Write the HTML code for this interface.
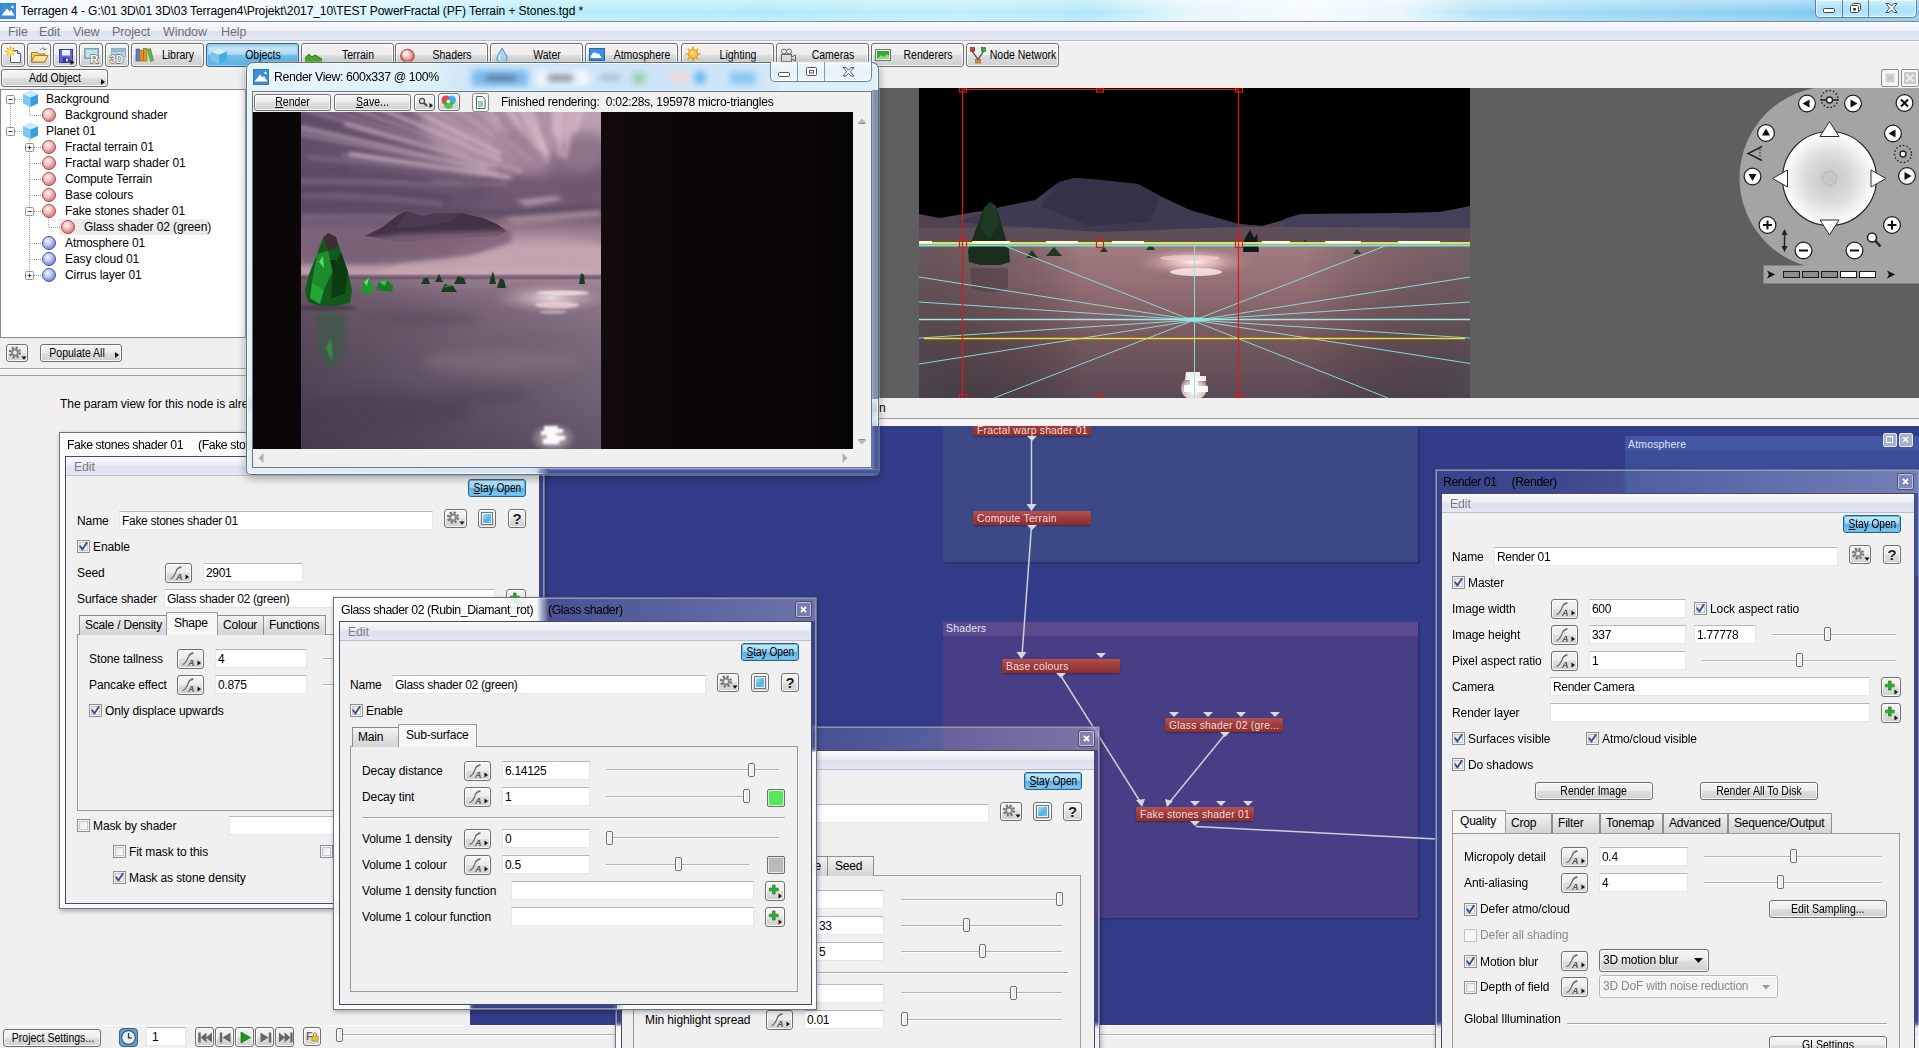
<!DOCTYPE html><html><head><meta charset="utf-8"><title>Terragen 4</title><style>
*{box-sizing:border-box}
html,body{margin:0;padding:0}
body{width:1919px;height:1048px;overflow:hidden;background:#f0f0f0;font-family:"Liberation Sans",sans-serif;font-size:12px;color:#000;position:relative}
div{position:absolute}
.t{white-space:pre;line-height:16px;height:16px;font-size:12px;letter-spacing:-0.1px}
.nar{display:inline-block;transform:scaleX(.84);transform-origin:center;white-space:pre}
.btn{border:1px solid #707070;border-radius:3px;background:linear-gradient(#f4f4f4 0%,#ececec 48%,#dedede 52%,#d0d0d0 100%);box-shadow:inset 0 0 0 1px rgba(255,255,255,.85);text-align:center;white-space:pre;font-size:12px;overflow:hidden}
.btn span{display:inline-block}
.inp{background:#fff;border:1px solid #e3e6ec;border-top-color:#b5b8c0;padding-left:2px;white-space:pre;font-size:12px;letter-spacing:-0.3px;overflow:hidden}
.chk{width:13px;height:13px;border:1px solid #8e8f8f;background:linear-gradient(135deg,#d8dce0 0%,#f6f6f6 60%,#fff 100%);box-shadow:inset 0 0 0 1px #f4f4f4, inset 0 0 0 2px #c5c9cf}
.chk.dis{border-color:#c2c2c2;background:#f6f6f6;box-shadow:none}
.trk{height:2px;border-top:1px solid #b4b4b4;border-bottom:1px solid #fcfcfc}
.thb{width:7px;height:14px;border:1px solid #6e6e6e;border-radius:2px;background:linear-gradient(90deg,#fdfdfd,#dcdcdc);box-shadow:inset 0 0 0 1px #fff}
.stay{border:1px solid #2c628b;border-radius:3px;background:linear-gradient(#cbe8f8 0%,#a3d5f1 46%,#5cace0 52%,#86caef 100%);box-shadow:inset 0 0 0 1px #5bbcf0;text-align:center;font-size:12px;white-space:pre}
.clb{width:15px;height:15px;border:1px solid rgba(255,255,255,.5);border-radius:2px;background:rgba(255,255,255,.08);box-shadow:0 0 0 1px rgba(40,45,90,.55)}
.tab{border:1px solid #8e8e8e;border-bottom:none;background:linear-gradient(#f3f3f3,#e2e2e2 50%,#d4d4d4);font-size:12px;letter-spacing:-0.2px;white-space:pre;text-align:left;padding-left:5px;line-height:19px;height:20px}
.tab.sel{background:#f6f6f6;border-color:#9a9a9a;height:23px;line-height:20px;padding-left:7px}
.pane{border:1px solid #9a9a9a;background:#f0f0f0}
.node{background:linear-gradient(#b45252 0%,#a03c3c 45%,#8c2e2e 100%);color:#f2dcda;font-size:11.5px;line-height:14px;height:14px;white-space:pre;padding-left:4px;box-shadow:0 1px 2px rgba(0,0,0,.35);border-radius:1px;letter-spacing:.25px}
.tri{width:0;height:0;border-left:5px solid transparent;border-right:5px solid transparent;border-top:5px solid #d8d8e4}
</style></head><body>
<div style="left:0px;top:0px;width:1919px;height:21px;background:linear-gradient(90deg,#eef8fd 0%,#f4fbfe 13%,#d2f3fc 20%,#b6ecfb 28%,#b0eafa 40%,#bdeefb 50%,#b0e8fa 57%,#e6f6fc 62%,#f4fbfe 68%,#e9f6fc 73%,#b4e3f8 77%,#9ad8f5 84%,#8fd0f3 90%,#7cc6ef 96%,#86cbf0 100%)"></div>
<div style="left:0px;top:0px;width:1919px;height:21px;background:linear-gradient(rgba(255,255,255,.4) 0%,rgba(255,255,255,.12) 45%,rgba(255,255,255,0) 55%,rgba(255,255,255,.2) 100%)"></div>
<div style="left:0px;top:21px;width:1919px;height:1px;background:#7d8a96"></div>
<svg style="position:absolute;left:0;top:3px" width="16" height="16" viewBox="0 0 16 16"><rect width="16" height="16" fill="#3e8fd6"/><rect x="0" y="0" width="16" height="16" fill="none" stroke="#2f7ac0"/><path d="M1.5 12.5 L7 5.5 L9.5 8.5 L11 7 L14.5 12.5Z" fill="#fff"/><circle cx="12.5" cy="4" r="1.2" fill="#fff"/></svg>
<div class="t" style="left:21px;top:2.5px;letter-spacing:-0.07px;font-size:12px">Terragen 4 - G:\01 3D\01 3D\03 Terragen4\Projekt\2017_10\TEST PowerFractal (PF) Terrain + Stones.tgd *</div>
<div style="left:1815px;top:0px;width:102px;height:18px;border:1px solid #6b8296;border-top:none;border-radius:0 0 5px 5px;background:linear-gradient(rgba(215,248,255,.75),rgba(190,238,253,.6) 50%,rgba(215,246,255,.7));box-shadow:inset 0 0 0 1px rgba(255,255,255,.6)"></div>
<div style="left:1842px;top:0px;width:1px;height:17px;background:#6b8296"></div>
<div style="left:1868px;top:0px;width:1px;height:17px;background:#6b8296"></div>
<svg style="position:absolute;left:1815px;top:0" width="102" height="18" viewBox="0 0 102 18"><rect x="8.5" y="8.5" width="11" height="4" rx="1" fill="#fff" stroke="#444"/><g fill="#fff" stroke="#444"><rect x="37.500" y="3.500" width="8" height="7" rx="1"/><rect x="35.500" y="5.500" width="8" height="7" rx="1"/><rect x="38" y="8" width="3" height="2.5" fill="#444" stroke="none"/></g><path d="M71 3.500 L74 3.500 L76.500 6 L79 3.500 L82 3.500 L78.500 8 L82 12.500 L79 12.500 L76.500 10 L74 12.500 L71 12.500 L74.500 8Z" fill="#fff" stroke="#444"/></svg>
<div style="left:0px;top:22px;width:1919px;height:19px;background:linear-gradient(#fbfbfd 0%,#eef0f8 45%,#dde1ef 50%,#e6e9f4 100%)"></div>
<div style="left:0px;top:40px;width:1919px;height:1px;background:#b9bfd0"></div>
<div style="left:0px;top:41px;width:1919px;height:1px;background:#f8f8fa"></div>
<div class="t" style="left:8px;top:23.5px;color:#707070;letter-spacing:-0.1px;font-size:12.5px">File</div>
<div class="t" style="left:39px;top:23.5px;color:#707070;letter-spacing:-0.1px;font-size:12.5px">Edit</div>
<div class="t" style="left:73px;top:23.5px;color:#707070;letter-spacing:-0.1px;font-size:12.5px">View</div>
<div class="t" style="left:112px;top:23.5px;color:#707070;letter-spacing:-0.1px;font-size:12.5px">Project</div>
<div class="t" style="left:163px;top:23.5px;color:#707070;letter-spacing:-0.1px;font-size:12.5px">Window</div>
<div class="t" style="left:221px;top:23.5px;color:#707070;letter-spacing:-0.1px;font-size:12.5px">Help</div>
<div class="btn" style="left:1px;top:43px;width:24px;height:24px;"><svg width="22" height="22" viewBox="0 0 22 22" style="position:absolute;left:0px;top:0px"><path d="M8.500 6.500h7l3 3v9h-10z" fill="#f4f7fd" stroke="#5a6270"/><path d="M15.500 6.500v3h3" fill="#cfd6e6" stroke="#5a6270"/><g stroke="#f0a000" stroke-width="1.100"><path d="M8.500 2.500v10M3.500 7.500h10M5 4l7 7M12 4l-7 7"/></g><circle cx="8.500" cy="7.500" r="3.200" fill="#ffd23a"/><circle cx="8.500" cy="7.500" r="1.800" fill="#ffec9a"/></svg></div>
<div class="btn" style="left:27px;top:43px;width:24px;height:24px;"><svg width="22" height="22" viewBox="0 0 22 22" style="position:absolute;left:0px;top:0px"><path d="M3.500 8.500h6l1.500 1.500h6v8h-13.500z" fill="#f3cf5e" stroke="#a5802a"/><path d="M3.500 18 L6.500 11.500h13.500l-3.500 6.500z" fill="#fbe394" stroke="#a5802a"/><path d="M12 6c2-3 5-2 5 0l1.500-1.500M17 6l-2-.5" fill="none" stroke="#888"/></svg></div>
<div class="btn" style="left:53px;top:43px;width:24px;height:24px;"><svg width="22" height="22" viewBox="0 0 22 22" style="position:absolute;left:0px;top:0px"><rect x="5.500" y="5.500" width="13" height="13" fill="#6466d8" stroke="#3a3c9c"/><rect x="8" y="6" width="8" height="5.500" fill="#eef0ff"/><rect x="8.500" y="13.500" width="7" height="5" fill="#34369a"/><rect x="12" y="14.500" width="2" height="3" fill="#dde"/><path d="M16.500 16l4 2.500-4 2.500z" fill="#111"/></svg></div>
<div class="btn" style="left:79px;top:43px;width:24px;height:24px;"><svg width="22" height="22" viewBox="0 0 22 22" style="position:absolute;left:0px;top:0px"><rect x="4.500" y="4.500" width="14" height="10" fill="#8fc3e0" stroke="#8c9aa6"/><rect x="6" y="6" width="11" height="7" fill="#c6e2f2"/><text x="10" y="18.500" font-family="Liberation Sans,sans-serif" font-weight="bold" font-size="11.500" fill="#fff" stroke="#6c6c6c" stroke-width="1.300" paint-order="stroke">R</text></svg></div>
<div class="btn" style="left:105px;top:43px;width:24px;height:24px;"><svg width="22" height="22" viewBox="0 0 22 22" style="position:absolute;left:0px;top:0px"><rect x="5.500" y="4.500" width="14" height="8" fill="#b4d6ea" stroke="#a0adb8"/><rect x="6" y="5" width="13" height="3" fill="#8fbcd8"/><text x="4" y="18.500" font-family="Liberation Sans,sans-serif" font-weight="bold" font-size="10.500" fill="#fff" stroke="#6c6c6c" stroke-width="1.300" paint-order="stroke">3D</text></svg></div>
<div class="btn" style="left:131px;top:43px;width:73px;height:24px;"><svg width="22" height="22" viewBox="0 0 22 22" style="position:absolute;left:1px;top:0px"><rect x="3" y="5" width="3.500" height="12" fill="#3d87d8" stroke="#2a5f9c" stroke-width=".6"/><rect x="6.500" y="6" width="4" height="11" fill="#e8862a" stroke="#a85a12" stroke-width=".6"/><rect x="10.500" y="4.500" width="3.500" height="12.500" fill="#c7a02a" stroke="#8a6c12" stroke-width=".6"/><path d="M14.500 5.500l3-1 3 12-3 1z" fill="#5fb648" stroke="#3a7f2a" stroke-width=".6"/></svg><span class="nar" style="position:absolute;left:-54.5px;width:200px;top:3px;line-height:16px;font-size:12.5px;text-align:center">Library</span></div>
<div class="btn" style="left:206px;top:43px;width:93px;height:24px;border-color:#2c628b;background:linear-gradient(#d4ebf8 0%,#b2dcf3 45%,#74bde8 52%,#5fb0e2 100%);box-shadow:inset 0 0 0 1px #8fd4f7,inset 0 2px 3px rgba(0,40,80,.25);"><svg width="22" height="22" viewBox="0 0 22 22" style="position:absolute;left:1px;top:0px"><path d="M3 7.500l8-3.500 8 3.500v9l-8 3.500-8-3.500z" fill="#7cc6ee"/><path d="M3 7.500l8-3.500 8 3.500-8 3.300z" fill="#d4eefb"/><path d="M11 10.800v9.200l8-3.500v-9z" fill="#4aaae2"/></svg><span class="nar" style="position:absolute;left:-44.5px;width:200px;top:3px;line-height:16px;font-size:12.5px;text-align:center">Objects</span></div>
<div class="btn" style="left:301px;top:43px;width:93px;height:24px;"><svg width="22" height="22" viewBox="0 0 22 22" style="position:absolute;left:1px;top:0px"><path d="M2 19 L2 14 L6 10 L9 13 L12 11 L17 14 L19 15 L19 19Z" fill="#4caa28"/><path d="M2 14 L6 10 L9 13 L12 11 L19 15" fill="none" stroke="#2f7a16"/></svg><span class="nar" style="position:absolute;left:-44.5px;width:200px;top:3px;line-height:16px;font-size:12.5px;text-align:center">Terrain</span></div>
<div class="btn" style="left:395px;top:43px;width:93px;height:24px;"><svg width="22" height="22" viewBox="0 0 22 22" style="position:absolute;left:1px;top:0px"><circle cx="10.500" cy="12" r="6.800" fill="#e27474" stroke="#b84a4a"/><circle cx="10" cy="11" r="5" fill="#f3b4b4"/><circle cx="9" cy="10" r="3" fill="#fdeaea"/></svg><span class="nar" style="position:absolute;left:-44.5px;width:200px;top:3px;line-height:16px;font-size:12.5px;text-align:center">Shaders</span></div>
<div class="btn" style="left:490px;top:43px;width:93px;height:24px;"><svg width="22" height="22" viewBox="0 0 22 22" style="position:absolute;left:1px;top:0px"><path d="M10 4 C12 8 15 11 15 14.500 A5 5 0 0 1 5 14.500 C5 11 8 8 10 4Z" fill="#a8d4f6" stroke="#4a8cd0"/><path d="M8 11c-1 2-1 4 .5 5.500" fill="none" stroke="#fff" stroke-width="1.2"/></svg><span class="nar" style="position:absolute;left:-44.5px;width:200px;top:3px;line-height:16px;font-size:12.5px;text-align:center">Water</span></div>
<div class="btn" style="left:585px;top:43px;width:93px;height:24px;"><svg width="22" height="22" viewBox="0 0 22 22" style="position:absolute;left:1px;top:0px"><rect x="2.500" y="4.500" width="15" height="12" fill="#3f8fe0" stroke="#2b68ac"/><path d="M5 14c-2 0-2-3 0-3 0-3 4-3 4.500-1 2-1 4 0 3.500 2 2 0 2 2 0 2z" fill="#fff"/></svg><span class="nar" style="position:absolute;left:-44.5px;width:200px;top:3px;line-height:16px;font-size:12.5px;text-align:center">Atmosphere</span></div>
<div class="btn" style="left:681px;top:43px;width:93px;height:24px;"><svg width="22" height="22" viewBox="0 0 22 22" style="position:absolute;left:1px;top:0px"><g stroke="#f0a020" stroke-width="1.600"><path d="M10 2.500v15M2.500 10h15M4.700 4.700l10.600 10.600M15.300 4.700L4.700 15.300"/></g><circle cx="10" cy="10" r="4.600" fill="#ffc23a" stroke="#e8961a"/><circle cx="9" cy="9" r="2" fill="#ffe28a"/></svg><span class="nar" style="position:absolute;left:-44.5px;width:200px;top:3px;line-height:16px;font-size:12.5px;text-align:center">Lighting</span></div>
<div class="btn" style="left:776px;top:43px;width:93px;height:24px;"><svg width="22" height="22" viewBox="0 0 22 22" style="position:absolute;left:1px;top:0px"><rect x="3.500" y="10.500" width="10" height="7" fill="#ddd" stroke="#666"/><path d="M13.500 13l4-2v6l-4-2" fill="#ddd" stroke="#666"/><circle cx="6" cy="7.500" r="2.500" fill="#eee" stroke="#666"/><circle cx="11" cy="7.500" r="2.500" fill="#eee" stroke="#666"/></svg><span class="nar" style="position:absolute;left:-44.5px;width:200px;top:3px;line-height:16px;font-size:12.5px;text-align:center">Cameras</span></div>
<div class="btn" style="left:871px;top:43px;width:93px;height:24px;"><svg width="22" height="22" viewBox="0 0 22 22" style="position:absolute;left:1px;top:0px"><rect x="2.500" y="5.500" width="15" height="11" fill="#2f9a2f" stroke="#777"/><rect x="3.500" y="6.500" width="13" height="9" fill="#35a83a" stroke="#e8e8e8"/><path d="M4 15l4-4 3 2 3-3 2 2v3z" fill="#8fe06a"/></svg><span class="nar" style="position:absolute;left:-44.5px;width:200px;top:3px;line-height:16px;font-size:12.5px;text-align:center">Renderers</span></div>
<div class="btn" style="left:966px;top:43px;width:93px;height:24px;"><svg width="22" height="22" viewBox="0 0 22 22" style="position:absolute;left:1px;top:0px"><rect x="2.500" y="3.500" width="4" height="4" fill="#e03030" stroke="#901818" stroke-width=".6"/><rect x="13.500" y="3.500" width="4" height="4" fill="#38a838" stroke="#1c6c1c" stroke-width=".6"/><rect x="7.500" y="15.500" width="5" height="3.500" fill="#e08a30" stroke="#90501a" stroke-width=".6"/><path d="M4.500 7.500L10 15.500M15.500 7.500L10 15.500" stroke="#444" stroke-width="1.300" fill="none"/></svg><span class="nar" style="position:absolute;left:-44.5px;width:200px;top:3px;line-height:16px;font-size:12.5px;text-align:center">Node Network</span></div>
<div class="btn" style="left:1px;top:69px;width:107px;height:18px;line-height:16px;"><span style=""><span class="nar" style="font-size:12.5px">Add Object</span></span></div>
<svg style="position:absolute;left:100px;top:78px" width="6" height="8"><path d="M1 1l4 3-4 3z" fill="#111"/></svg>
<div style="left:0px;top:89px;width:246px;height:249px;background:#fff;border:1px solid #828790"></div>
<div style="left:10px;top:104px;width:1px;height:27px;background-image:linear-gradient(#a0a0a0 50%,transparent 50%);background-size:1px 2px"></div>
<div style="left:29px;top:107px;width:1px;height:8px;background-image:linear-gradient(#a0a0a0 50%,transparent 50%);background-size:1px 2px"></div>
<div style="left:29px;top:139px;width:1px;height:137px;background-image:linear-gradient(#a0a0a0 50%,transparent 50%);background-size:1px 2px"></div>
<div style="left:48px;top:216px;width:1px;height:12px;background-image:linear-gradient(#a0a0a0 50%,transparent 50%);background-size:1px 2px"></div>
<div style="left:15px;top:99px;width:7px;height:1px;background-image:linear-gradient(90deg,#a0a0a0 50%,transparent 50%);background-size:2px 1px"></div>
<svg style="position:absolute;left:6px;top:95px" width="9" height="9" viewBox="0 0 9 9"><rect x=".5" y=".5" width="8" height="8" rx="1" fill="#fafafa" stroke="#919191"/><path d="M2.500 4.500h4" stroke="#444"/></svg>
<svg style="position:absolute;left:22px;top:90px" width="17" height="17" viewBox="0 0 17 17"><path d="M1 4.500l7.500-3.500 7.500 3.500v8.500l-7.500 3.500-7.500-3.500z" fill="#56b4ea"/><path d="M1 4.500l7.500-3.500 7.500 3.500-7.500 3.200z" fill="#c8eafb"/><path d="M8.500 7.700v9.300l7.500-3.500V4.500z" fill="#3a9fdc"/><path d="M1 4.500l7.500 3.200v9.300l-7.500-3.500z" fill="#7cc8f0"/></svg>
<div class="t" style="left:46px;top:91px;">Background</div>
<div style="left:30px;top:115px;width:12px;height:1px;background-image:linear-gradient(90deg,#a0a0a0 50%,transparent 50%);background-size:2px 1px"></div>
<div style="left:42px;top:108px;width:14px;height:14px;border-radius:50%;background:radial-gradient(circle at 40% 35%,#fff2f2 0%,#f3c4c4 35%,#df8080 70%,#c05050 100%);border:1px solid #b04848"></div>
<div class="t" style="left:65px;top:107px;">Background shader</div>
<div style="left:15px;top:131px;width:7px;height:1px;background-image:linear-gradient(90deg,#a0a0a0 50%,transparent 50%);background-size:2px 1px"></div>
<svg style="position:absolute;left:6px;top:127px" width="9" height="9" viewBox="0 0 9 9"><rect x=".5" y=".5" width="8" height="8" rx="1" fill="#fafafa" stroke="#919191"/><path d="M2.500 4.500h4" stroke="#444"/></svg>
<svg style="position:absolute;left:22px;top:122px" width="17" height="17" viewBox="0 0 17 17"><path d="M1 4.500l7.500-3.500 7.500 3.500v8.500l-7.500 3.500-7.500-3.500z" fill="#56b4ea"/><path d="M1 4.500l7.500-3.500 7.500 3.500-7.500 3.200z" fill="#c8eafb"/><path d="M8.500 7.700v9.300l7.500-3.500V4.500z" fill="#3a9fdc"/><path d="M1 4.500l7.500 3.200v9.300l-7.500-3.500z" fill="#7cc8f0"/></svg>
<div class="t" style="left:46px;top:123px;">Planet 01</div>
<div style="left:30px;top:147px;width:12px;height:1px;background-image:linear-gradient(90deg,#a0a0a0 50%,transparent 50%);background-size:2px 1px"></div>
<svg style="position:absolute;left:25px;top:143px" width="9" height="9" viewBox="0 0 9 9"><rect x=".5" y=".5" width="8" height="8" rx="1" fill="#fafafa" stroke="#919191"/><path d="M2.500 4.500h4" stroke="#444"/><path d="M4.500 2.500v4" stroke="#444"/></svg>
<div style="left:42px;top:140px;width:14px;height:14px;border-radius:50%;background:radial-gradient(circle at 40% 35%,#fff2f2 0%,#f3c4c4 35%,#df8080 70%,#c05050 100%);border:1px solid #b04848"></div>
<div class="t" style="left:65px;top:139px;">Fractal terrain 01</div>
<div style="left:30px;top:163px;width:12px;height:1px;background-image:linear-gradient(90deg,#a0a0a0 50%,transparent 50%);background-size:2px 1px"></div>
<div style="left:42px;top:156px;width:14px;height:14px;border-radius:50%;background:radial-gradient(circle at 40% 35%,#fff2f2 0%,#f3c4c4 35%,#df8080 70%,#c05050 100%);border:1px solid #b04848"></div>
<div class="t" style="left:65px;top:155px;">Fractal warp shader 01</div>
<div style="left:30px;top:179px;width:12px;height:1px;background-image:linear-gradient(90deg,#a0a0a0 50%,transparent 50%);background-size:2px 1px"></div>
<div style="left:42px;top:172px;width:14px;height:14px;border-radius:50%;background:radial-gradient(circle at 40% 35%,#fff2f2 0%,#f3c4c4 35%,#df8080 70%,#c05050 100%);border:1px solid #b04848"></div>
<div class="t" style="left:65px;top:171px;">Compute Terrain</div>
<div style="left:30px;top:195px;width:12px;height:1px;background-image:linear-gradient(90deg,#a0a0a0 50%,transparent 50%);background-size:2px 1px"></div>
<div style="left:42px;top:188px;width:14px;height:14px;border-radius:50%;background:radial-gradient(circle at 40% 35%,#fff2f2 0%,#f3c4c4 35%,#df8080 70%,#c05050 100%);border:1px solid #b04848"></div>
<div class="t" style="left:65px;top:187px;">Base colours</div>
<div style="left:30px;top:211px;width:12px;height:1px;background-image:linear-gradient(90deg,#a0a0a0 50%,transparent 50%);background-size:2px 1px"></div>
<svg style="position:absolute;left:25px;top:207px" width="9" height="9" viewBox="0 0 9 9"><rect x=".5" y=".5" width="8" height="8" rx="1" fill="#fafafa" stroke="#919191"/><path d="M2.500 4.500h4" stroke="#444"/></svg>
<div style="left:42px;top:204px;width:14px;height:14px;border-radius:50%;background:radial-gradient(circle at 40% 35%,#fff2f2 0%,#f3c4c4 35%,#df8080 70%,#c05050 100%);border:1px solid #b04848"></div>
<div class="t" style="left:65px;top:203px;">Fake stones shader 01</div>
<div style="left:59px;top:219px;width:149px;height:16px;background:#ececec"></div>
<div style="left:49px;top:227px;width:12px;height:1px;background-image:linear-gradient(90deg,#a0a0a0 50%,transparent 50%);background-size:2px 1px"></div>
<div style="left:61px;top:220px;width:14px;height:14px;border-radius:50%;background:radial-gradient(circle at 40% 35%,#fff2f2 0%,#f3c4c4 35%,#df8080 70%,#c05050 100%);border:1px solid #b04848"></div>
<div class="t" style="left:84px;top:219px;">Glass shader 02 (green)</div>
<div style="left:30px;top:243px;width:12px;height:1px;background-image:linear-gradient(90deg,#a0a0a0 50%,transparent 50%);background-size:2px 1px"></div>
<div style="left:42px;top:236px;width:14px;height:14px;border-radius:50%;background:radial-gradient(circle at 40% 35%,#f4f6ff 0%,#c3ccf6 35%,#7f8fe0 70%,#4c5cc0 100%);border:1px solid #3f4fae"></div>
<div class="t" style="left:65px;top:235px;">Atmosphere 01</div>
<div style="left:30px;top:259px;width:12px;height:1px;background-image:linear-gradient(90deg,#a0a0a0 50%,transparent 50%);background-size:2px 1px"></div>
<div style="left:42px;top:252px;width:14px;height:14px;border-radius:50%;background:radial-gradient(circle at 40% 35%,#f4f6ff 0%,#c3ccf6 35%,#7f8fe0 70%,#4c5cc0 100%);border:1px solid #3f4fae"></div>
<div class="t" style="left:65px;top:251px;">Easy cloud 01</div>
<div style="left:30px;top:275px;width:12px;height:1px;background-image:linear-gradient(90deg,#a0a0a0 50%,transparent 50%);background-size:2px 1px"></div>
<svg style="position:absolute;left:25px;top:271px" width="9" height="9" viewBox="0 0 9 9"><rect x=".5" y=".5" width="8" height="8" rx="1" fill="#fafafa" stroke="#919191"/><path d="M2.500 4.500h4" stroke="#444"/><path d="M4.500 2.500v4" stroke="#444"/></svg>
<div style="left:42px;top:268px;width:14px;height:14px;border-radius:50%;background:radial-gradient(circle at 40% 35%,#f4f6ff 0%,#c3ccf6 35%,#7f8fe0 70%,#4c5cc0 100%);border:1px solid #3f4fae"></div>
<div class="t" style="left:65px;top:267px;">Cirrus layer 01</div>
<div class="btn" style="left:6px;top:344px;width:22px;height:18px"><svg width="24" height="20" viewBox="0 0 24 20" style="position:absolute;left:-2px;top:-2px"><g transform="translate(10,9.5)"><circle r="4.9" fill="none" stroke="#707070" stroke-width="2.4" stroke-dasharray="2.1 1.75"/><circle r="3.9" fill="#858585"/><circle r="1.9" fill="#ececec"/></g><path d="M16.5 13.5h5l-2.5 3.2z" fill="#111"/></svg></div>
<div class="btn" style="left:40px;top:344px;width:82px;height:18px;line-height:16px;padding-right:8px"><span style=""><span class="nar" style="font-size:12.5px">Populate All</span></span></div>
<svg style="position:absolute;left:114px;top:351px" width="6" height="8"><path d="M1 1l4 3-4 3z" fill="#111"/></svg>
<div style="left:0px;top:368px;width:1919px;height:1px;background:#a6a6a6"></div>
<div style="left:0px;top:369px;width:1919px;height:6px;background:#f4f4f4"></div>
<div style="left:0px;top:375px;width:1919px;height:1px;background:#a0a0a0"></div>
<div class="t" style="left:60px;top:396px;letter-spacing:-0.05px">The param view for this node is already open in another window.</div>
<div style="left:878px;top:398px;width:1041px;height:21px;background:#efefef"></div>
<div style="left:878px;top:418px;width:1041px;height:1px;background:#9c9c9c"></div>
<div style="left:878px;top:419px;width:1041px;height:7px;background:#f6f6f6"></div>
<div class="t" style="left:400px;width:485.5px;top:400px;text-align:right;letter-spacing:-0.05px">Close the other window or bring it to the front to edit this node again</div>
<div style="left:0px;top:1025px;width:1919px;height:23px;background:#f0f0f0"></div>
<div style="left:0px;top:1025px;width:1919px;height:1px;background:#fafafa"></div>
<div class="btn" style="left:3px;top:1029px;width:98px;height:18px;line-height:16px;"><span style=""><span class="nar" style="font-size:12.5px">Project Settings...</span></span></div>
<svg style="position:absolute;left:119px;top:1028px" width="19" height="19" viewBox="0 0 19 19"><rect x=".5" y=".5" width="18" height="18" rx="3.500" fill="#5f9fd2" stroke="#35658e"/><circle cx="9.500" cy="9.500" r="6.800" fill="#e9f1f7" stroke="#4a5a68" stroke-width="1.200"/><path d="M9.500 5v4.800h3.500" fill="none" stroke="#333" stroke-width="1.300"/></svg>
<div class="inp" style="left:146px;top:1027px;width:40px;height:19px;line-height:18px;padding-left:5px">1</div>
<div class="btn" style="left:195px;top:1027px;width:19px;height:20px"><svg width="20" height="19" viewBox="0 0 20 19" style="position:absolute;left:-1.500px;top:-.5px"><path d="M4.500 4.500v10" stroke="#666" stroke-width="2.400"/><path d="M11.500 4.500v10l-6-5zM17 4.500v10l-6-5z" fill="#666"/></svg></div>
<div class="btn" style="left:215px;top:1027px;width:19px;height:20px"><svg width="20" height="19" viewBox="0 0 20 19" style="position:absolute;left:-1.500px;top:-.5px"><path d="M6 4.500v10" stroke="#666" stroke-width="2.400"/><path d="M15.500 4.500v10l-8-5z" fill="#666"/></svg></div>
<div class="btn" style="left:235px;top:1027px;width:19px;height:20px"><svg width="20" height="19" viewBox="0 0 20 19" style="position:absolute;left:-1.500px;top:-.5px"><path d="M6 4v11l9.500-5.500z" fill="#1a9a1a" stroke="#0d6a0d" stroke-width=".6"/></svg></div>
<div class="btn" style="left:255px;top:1027px;width:19px;height:20px"><svg width="20" height="19" viewBox="0 0 20 19" style="position:absolute;left:-1.500px;top:-.5px"><path d="M15 4.500v10" stroke="#666" stroke-width="2.400"/><path d="M5.500 4.500v10l8-5z" fill="#666"/></svg></div>
<div class="btn" style="left:275px;top:1027px;width:19px;height:20px"><svg width="20" height="19" viewBox="0 0 20 19" style="position:absolute;left:-1.500px;top:-.5px"><path d="M16.500 4.500v10" stroke="#666" stroke-width="2.400"/><path d="M4 4.500v10l6-5zM9.500 4.500v10l6-5z" fill="#666"/></svg></div>
<div class="btn" style="left:303px;top:1027px;width:18px;height:19px"><svg width="18" height="19" viewBox="0 0 18 19" style="position:absolute;left:-1px;top:-1px"><text x="3" y="12.500" font-family="Liberation Sans,sans-serif" font-weight="bold" font-size="11" fill="#6a6a6a">F</text><rect x="9" y="9" width="6" height="5" fill="#f0c020" stroke="#a07a10" stroke-width=".6"/><path d="M10.500 9v-1.500a1.500 1.500 0 0 1 3 0V9" fill="none" stroke="#a07a10"/></svg></div>
<div class="trk" style="left:338px;top:1034px;width:1581px"></div>
<div class="thb" style="left:335.5px;top:1027.5px"></div>
<div style="left:470px;top:426px;width:1449px;height:599px;background:#333c88"></div>
<div style="left:943px;top:426px;width:475px;height:136px;background:#3b4a87;box-shadow:1px 1px 2px rgba(0,0,20,.35)"></div>
<div style="left:943px;top:622px;width:475px;height:296px;background:#483e85;box-shadow:1px 1px 2px rgba(0,0,20,.35)"></div>
<div style="left:943px;top:622px;width:475px;height:14px;background:#5a4a8e"></div>
<div class="t" style="left:946px;top:619.5px;color:#e8e4f4;font-size:11.5px;letter-spacing:.2px;transform:scaleX(.91);transform-origin:left">Shaders</div>
<div style="left:1625px;top:436px;width:294px;height:140px;background:#3c4d9a"></div>
<div style="left:1625px;top:436px;width:294px;height:15px;background:#4356a4"></div>
<div class="t" style="left:1628px;top:435.5px;color:#dfe6fa;font-size:11.5px;letter-spacing:.2px;transform:scaleX(.91);transform-origin:left">Atmosphere</div>
<div style="left:1883px;top:433px;width:14px;height:14px;border:1px solid #e6e8f0;border-radius:2px;background:#aab0c8"><svg width="13" height="13" viewBox="0 0 13 13" style="position:absolute;left:-1px;top:-1px"><rect x="3.500" y="3.500" width="6" height="6" fill="none" stroke="#fff"/></svg></div>
<div style="left:1899px;top:433px;width:14px;height:14px;border:1px solid #e6e8f0;border-radius:2px;background:#aab0c8"><svg width="13" height="13" viewBox="0 0 13 13" style="position:absolute;left:-1px;top:-1px"><path d="M4 4l5 5M9 4l-5 5" stroke="#fff" stroke-width="1.400"/></svg></div>
<svg style="position:absolute;left:470px;top:426px" width="1449" height="599" viewBox="470 426 1449 599"><g stroke="#cfcfd8" stroke-width="1.500" fill="none"><path d="M1031.500 437V508"/><path d="M1031.500 526L1022 656"/><path d="M1061 676L1141 803"/><path d="M1224.500 735L1169 803"/><path d="M1196 826.500L1436 839"/></g><g fill="#d6d6de"><path d="M1026.500 504h10l-5 7z"/><path d="M1016.500 652h10l-5 7z"/><path d="M1136 800l9-1-3 8z"/><path d="M1165 799l8 2-6 6z"/></g></svg>
<div class="node" style="left:973px;top:426px;width:118px;height:10px;line-height:8px;overflow:hidden;background:linear-gradient(#a03c3c,#8c2e2e)"><span style="display:inline-block;transform:scaleX(.9);transform-origin:left">Fractal warp shader 01</span></div>
<div class="tri" style="left:1026.5px;top:436px;width:0px;height:0px;"></div>
<div class="node" style="left:973px;top:511px;width:118px;height:14px;line-height:14px"><span style="display:inline-block;transform:scaleX(.9);transform-origin:left">Compute Terrain</span></div>
<div class="tri" style="left:1026.5px;top:525px;width:0px;height:0px;"></div>
<div class="node" style="left:1002px;top:659px;width:118px;height:14px;line-height:14px"><span style="display:inline-block;transform:scaleX(.9);transform-origin:left">Base colours</span></div>
<div class="tri" style="left:1095.5px;top:653px;width:0px;height:0px;"></div>
<div class="tri" style="left:1056px;top:673px;width:0px;height:0px;"></div>
<div class="node" style="left:1165px;top:718px;width:118px;height:14px;line-height:14px"><span style="display:inline-block;transform:scaleX(.9);transform-origin:left">Glass shader 02 (gre...</span></div>
<div class="tri" style="left:1169px;top:712px;width:0px;height:0px;"></div>
<div class="tri" style="left:1202.5px;top:712px;width:0px;height:0px;"></div>
<div class="tri" style="left:1236px;top:712px;width:0px;height:0px;"></div>
<div class="tri" style="left:1270px;top:712px;width:0px;height:0px;"></div>
<div class="tri" style="left:1219.5px;top:732px;width:0px;height:0px;"></div>
<div class="node" style="left:1136px;top:807px;width:118px;height:14px;line-height:14px"><span style="display:inline-block;transform:scaleX(.9);transform-origin:left">Fake stones shader 01</span></div>
<div class="tri" style="left:1189.5px;top:801px;width:0px;height:0px;"></div>
<div class="tri" style="left:1216px;top:801px;width:0px;height:0px;"></div>
<div class="tri" style="left:1242.5px;top:801px;width:0px;height:0px;"></div>
<div class="tri" style="left:1189.5px;top:821px;width:0px;height:0px;"></div>
<div style="left:878px;top:88px;width:1041px;height:310px;background:#5f5f5f"></div>
<svg style="position:absolute;left:919px;top:88px" width="551" height="310" viewBox="919 88 551 310"><defs><linearGradient id="pw" x1="0" y1="0" x2="0" y2="1"><stop offset="0" stop-color="#a07c80"/><stop offset=".25" stop-color="#946f74"/><stop offset=".6" stop-color="#76595f"/><stop offset="1" stop-color="#5a4a55"/></linearGradient><radialGradient id="pg" cx="1194" cy="262" r="60" gradientUnits="userSpaceOnUse" gradientTransform="translate(0 196.500) scale(1 .25)"><stop offset="0" stop-color="#fff0ee"/><stop offset=".35" stop-color="#e8bfc0" stop-opacity=".9"/><stop offset="1" stop-color="#b08888" stop-opacity="0"/></radialGradient><radialGradient id="pg2" cx="1194" cy="392" r="22" gradientUnits="userSpaceOnUse"><stop offset="0" stop-color="#fff"/><stop offset=".5" stop-color="#f6dcdc" stop-opacity=".8"/><stop offset="1" stop-color="#a08080" stop-opacity="0"/></radialGradient><linearGradient id="pl" x1="0" y1="0" x2="1" y2="0"><stop offset="0" stop-color="#3a3a40" stop-opacity=".55"/><stop offset=".3" stop-color="#000" stop-opacity="0"/><stop offset=".7" stop-color="#000" stop-opacity="0"/><stop offset="1" stop-color="#3a4048" stop-opacity=".45"/></linearGradient></defs><rect x="919" y="88" width="551" height="310" fill="#000"/><path d="M919 214 L940 218 L975 212 L1010 208 L1040 204 L1060 208 L1239 224 L1262 226 L1290 218 L1320 214 L1400 214 L1440 212 L1470 207 L1470 246 L919 246Z" fill="#4f4350"/><path d="M919 228 L1470 226 L1470 246 L919 246Z" fill="#5e4e58"/><path d="M955 222 L1000 207 L1035 200 L1059 182 L1075 178 L1100 180 L1138 184 L1160 196 L1190 210 L1239 224 L1262 226 L1100 232 Z" fill="#3f3a52"/><path d="M1059 182 L1075 178 L1100 180 L1138 184 L1160 196 L1150 222 L1090 226 L1040 206Z" fill="#36324a"/><path d="M1284 219 L1300 214 L1400 213 L1440 212 L1470 206 L1470 228 L1284 227Z" fill="#45405a"/><rect x="919" y="245" width="551" height="153" fill="url(#pw)"/><rect x="919" y="245" width="551" height="153" fill="url(#pl)"/><ellipse cx="1194" cy="262" rx="62" ry="16" fill="url(#pg)"/><ellipse cx="1196" cy="272" rx="26" ry="4" fill="#fbe9e6" opacity=".85"/><ellipse cx="1190" cy="258" rx="30" ry="3" fill="#f0d0d0" opacity=".7"/><ellipse cx="1194" cy="388" rx="13" ry="12" fill="url(#pg2)"/><path d="M1186 372h14v4h6v5h-8v5h10v6h-24v-7h6v-5h-5z" fill="#fff" opacity=".9"/><path d="M969 262 L968 250 L975 232 L984 208 L990 202 L996 206 L1002 226 L1009 250 L1010 262 L1000 265 L980 265Z" fill="#182f20"/><path d="M984 208 L990 202 L996 206 L999 222 L990 240 L981 230Z" fill="#1c3a24"/><path d="M970 268h38v20q-18 8-36 0z" fill="#4a3d44" opacity=".55"/><path d="M1243 252 L1244 240 L1250 230 L1254 238 L1257 234 L1259 252Z" fill="#14181c"/><path d="M1026 258l6-8 6 8zM1046 256l8-9 8 9zM1146 250l5-7 4 7zM1100 252l4-5 4 5zM1302 244l3-5 3 5zM1353 254l4-5 4 5z" fill="#1e3a22"/><rect x="919" y="242" width="551" height="2.500" fill="#e8e060"/><rect x="919" y="244.500" width="551" height="2" fill="#7fe0d8"/><g fill="#fffbe0"><rect x="919" y="241" width="13" height="2.500"/><rect x="972" y="241" width="38" height="2.500"/><rect x="1046" y="241" width="32" height="2.500"/><rect x="1112" y="241" width="32" height="2.500"/><rect x="1262" y="241" width="28" height="2.500"/><rect x="1325" y="241" width="36" height="2.500"/><rect x="1398" y="241" width="42" height="2.500"/></g><g stroke="#8fe4e4" stroke-width="1" fill="none" opacity=".9"><path d="M1194.500 246V398"/><path d="M919 277L1470 363.500M919 302L1470 338M919 338L1470 302M919 364L1470 277M994 398L1385 246M1005 246L1388 398"/></g><path d="M919 319.500H1470" stroke="#9aeaea" stroke-width="1.600"/><ellipse cx="1194.500" cy="319.500" rx="16" ry="2.200" fill="#8fe4e4"/><path d="M924 338.500H1465" stroke="#f0e020" stroke-width="1.300"/><g stroke="#e01818" stroke-width="1.200" fill="none"><path d="M962.500 89.500H1238.500M962.500 89.500V398M1238.500 89.500V398"/><rect x="959.500" y="88" width="7" height="4"/><rect x="1096.500" y="88" width="7" height="4"/><rect x="1235.500" y="88" width="7" height="4"/><rect x="959.500" y="239.500" width="7" height="8"/><rect x="1096.500" y="239.500" width="7" height="8"/><rect x="1235.500" y="239.500" width="7" height="8"/><rect x="959.500" y="394.500" width="7" height="6"/><rect x="1096.500" y="394.500" width="7" height="6"/><rect x="1235.500" y="394.500" width="7" height="6"/></g></svg>
<div style="left:1881px;top:69px;width:18px;height:18px;border:1px solid #8e8e8e;border-radius:2px;background:#f6f6f6"><svg width="18" height="18" viewBox="0 0 18 18" style="position:absolute;left:-1px;top:-1px"><rect x="5.500" y="5.500" width="7" height="7" fill="#c4c4c4" stroke="#d2d2d2" stroke-width="2"/></svg></div>
<div style="left:1901px;top:69px;width:18px;height:18px;border:1px solid #8e8e8e;border-radius:2px;background:#f6f6f6"><svg width="18" height="18" viewBox="0 0 18 18" style="position:absolute;left:-1px;top:-1px"><rect x="3" y="3" width="12" height="12" fill="#c9c9c9"/><path d="M5.500 5.500l7 7M12.500 5.500l-7 7" stroke="#ececec" stroke-width="2.200"/></svg></div>
<svg style="position:absolute;left:1730px;top:88px" width="189" height="200" viewBox="1730 88 189 200"><defs><radialGradient id="ng" cx=".5" cy=".5" r=".5"><stop offset="0" stop-color="#c4c4c4"/><stop offset=".55" stop-color="#dedede"/><stop offset="1" stop-color="#fff"/></radialGradient></defs><circle cx="1831" cy="178" r="91.500" fill="#a4a4a4"/><rect x="1831" y="88" width="88" height="190" fill="#a4a4a4"/><rect x="1763.500" y="265.500" width="156" height="18" fill="#a4a4a4"/><circle cx="1829.500" cy="178.500" r="47" fill="url(#ng)" stroke="#2a2a2a" stroke-width="1.200"/><circle cx="1829.500" cy="178.500" r="7" fill="none" stroke="#b4b4b4"/><g fill="#fff" stroke="#2a2a2a" stroke-width="1"><path d="M1829.500 121.500l9.500 15h-19z"/><path d="M1829.500 235l9.500-15h-19z"/><path d="M1772.500 178.500l15-8.500v17z"/><path d="M1886 178.500l-15-8.500v17z"/></g><circle cx="1807" cy="103.5" r="8.400" fill="#fff" stroke="#1a1a1a" stroke-width="1.200"/><path d="M1802.5 103.5l7-4v8z" fill="#111"/><circle cx="1853" cy="103.5" r="8.400" fill="#fff" stroke="#1a1a1a" stroke-width="1.200"/><path d="M1857.5 103.5l-7-4v8z" fill="#111"/><circle cx="1904.5" cy="103" r="8.400" fill="#fff" stroke="#1a1a1a" stroke-width="1.200"/><path d="M1901.0 99.5l7 7M1908.0 99.5l-7 7" stroke="#111" stroke-width="2"/><circle cx="1766" cy="133" r="8.400" fill="#fff" stroke="#1a1a1a" stroke-width="1.200"/><path d="M1766 128.5l4 7h-8z" fill="#111"/><circle cx="1893" cy="133.5" r="8.400" fill="#fff" stroke="#1a1a1a" stroke-width="1.200"/><path d="M1888.5 133.5l7-4v8z" fill="#111"/><circle cx="1752.5" cy="176.5" r="8.400" fill="#fff" stroke="#1a1a1a" stroke-width="1.200"/><path d="M1752.5 181.0l4-7h-8z" fill="#111"/><circle cx="1907" cy="176" r="8.400" fill="#fff" stroke="#1a1a1a" stroke-width="1.200"/><path d="M1911.5 176l-7-4v8z" fill="#111"/><circle cx="1767.5" cy="225" r="8.400" fill="#fff" stroke="#1a1a1a" stroke-width="1.200"/><path d="M1763.0 225h9M1767.5 220.5v9" stroke="#111" stroke-width="2"/><circle cx="1892" cy="225" r="8.400" fill="#fff" stroke="#1a1a1a" stroke-width="1.200"/><path d="M1887.5 225h9M1892 220.5v9" stroke="#111" stroke-width="2"/><circle cx="1803.5" cy="250.5" r="8.400" fill="#fff" stroke="#1a1a1a" stroke-width="1.200"/><path d="M1799.0 250.5h9" stroke="#111" stroke-width="2"/><circle cx="1854.5" cy="250.5" r="8.400" fill="#fff" stroke="#1a1a1a" stroke-width="1.200"/><path d="M1850.0 250.5h9" stroke="#111" stroke-width="2"/><circle cx="1829.500" cy="99" r="8.500" fill="none" stroke="#222" stroke-width="1.400" stroke-dasharray="1.600 2"/><circle cx="1829.500" cy="100" r="3" fill="#fff" stroke="#222" stroke-width="1.400"/><path d="M1821 100h5M1833 100h5" stroke="#222" stroke-width="1.400"/><circle cx="1903" cy="154" r="8.500" fill="none" stroke="#222" stroke-width="1.400" stroke-dasharray="1.600 2"/><circle cx="1903" cy="154" r="3" fill="#fff" stroke="#222" stroke-width="1.400"/><path d="M1762 146.500L1748 153.500L1762 160.500" fill="none" stroke="#222" stroke-width="1.400"/><path d="M1760 149v9" stroke="#222" stroke-dasharray="1.500 1.500"/><path d="M1784.500 231v19" stroke="#222" stroke-width="1.500"/><path d="M1784.500 229l3 6h-6zM1784.500 252l3-6h-6z" fill="#222"/><circle cx="1872" cy="237.500" r="4.500" fill="#fff" stroke="#222" stroke-width="1.600"/><path d="M1875.500 241l5 5.500" stroke="#222" stroke-width="2.400"/><path d="M1767 270.500l8 4-8 4 2-4z" fill="#111"/><path d="M1887 270.500l8 4-8 4 2-4z" fill="#111"/><rect x="1783.5" y="271.500" width="16" height="6" fill="#8c8c8c" stroke="#1a1a1a"/><rect x="1802.5" y="271.500" width="16" height="6" fill="#8c8c8c" stroke="#1a1a1a"/><rect x="1821.5" y="271.500" width="16" height="6" fill="#8c8c8c" stroke="#1a1a1a"/><rect x="1840.5" y="271.500" width="16" height="6" fill="#fff" stroke="#1a1a1a"/><rect x="1859.5" y="271.500" width="16" height="6" fill="#fff" stroke="#1a1a1a"/></svg>
<div style="left:59px;top:432px;width:486px;height:477px;background:rgba(255,255,255,.04);border:1px solid #6c718c;box-shadow:inset 0 0 0 1px rgba(255,255,255,.42),1px 2px 5px rgba(0,0,0,.3);backdrop-filter:blur(2px)"></div>
<div style="left:61px;top:434px;width:482px;height:22px;background:linear-gradient(90deg,rgba(255,255,255,.0) 0%,rgba(255,255,255,.02) 25%,rgba(255,255,255,.26) 100%)"></div>
<div style="left:60px;top:433px;width:410px;height:23px;background:rgba(255,255,255,.72)"></div>
<div style="left:60px;top:456px;width:5px;height:452px;background:rgba(255,255,255,.72)"></div>
<div style="left:65px;top:904px;width:475px;height:4px;background:rgba(255,255,255,.72)"></div>
<div class="t" style="left:67px;top:436.5px;letter-spacing:-0.43px;font-size:12.3px">Fake stones shader 01     (Fake stones shader)</div>
<div style="left:65px;top:456px;width:475px;height:448px;background:#f0f0f0;border:1px solid #454a5e"></div>
<div style="left:66px;top:457px;width:473px;height:19px;background:linear-gradient(#fafafd 0%,#eceff7 40%,#dde2f0 55%,#e3e7f3 100%);border-bottom:1px solid #b8bfd2"></div>
<div class="t" style="left:74px;top:459px;color:#7c7c7c;font-size:12.3px;letter-spacing:-0.1px">Edit</div>
<div class="stay" style="left:468px;top:479px;width:58px;height:18px;line-height:16px"><span class="nar"><u>S</u>tay Open</span></div>
<div class="t" style="left:77px;top:513px;">Name</div>
<div class="inp" style="left:119px;top:511px;width:314px;height:19px;line-height:18px;">Fake stones shader 01</div>
<div class="btn" style="left:444px;top:509px;width:23px;height:19px"><svg width="24" height="20" viewBox="0 0 24 20" style="position:absolute;left:-2px;top:-2px"><g transform="translate(10,9.5)"><circle r="4.9" fill="none" stroke="#707070" stroke-width="2.4" stroke-dasharray="2.1 1.75"/><circle r="3.9" fill="#858585"/><circle r="1.9" fill="#ececec"/></g><path d="M16.5 13.5h5l-2.5 3.2z" fill="#111"/></svg></div>
<div class="btn" style="left:478px;top:509px;width:18px;height:19px"><div style="position:absolute;left:2px;top:2px;width:12px;height:13px;box-shadow:inset 0 0 0 1px #e8f4fb;border:1px solid #777;background:linear-gradient(135deg,#bfe6fb,#4fb2ea 60%,#7fd0f5)"></div></div>
<div class="btn" style="left:508px;top:509px;width:18px;height:19px;line-height:17px;font-weight:bold;font-size:15px;color:#222"><span>?</span></div>
<div class="chk" style="left:77px;top:540px"><svg width="13" height="13" viewBox="0 0 13 13" style="position:absolute;left:-1px;top:-1px"><path d="M3.2 6.2 L5.4 9.6 L9.8 2.8" fill="none" stroke="#3a4f8c" stroke-width="1.9" stroke-linecap="round" stroke-linejoin="round"/></svg></div>
<div class="t" style="left:93px;top:538.5px;">Enable</div>
<div class="t" style="left:77px;top:564.5px;">Seed</div>
<div class="btn fx" style="left:165px;top:563px;width:27px;height:20px;"><svg width="27" height="20" viewBox="0 0 27 20" style="position:absolute;left:-1px;top:-1px"><path d="M5.5 15.5 C9 15 10 11 11.5 7.5 C12.5 5 14 4.2 16.5 4" fill="none" stroke="#6a6a6a" stroke-width="1.3"/><text x="11" y="16.5" font-family="Liberation Sans,sans-serif" font-size="9" font-style="italic" font-weight="bold" fill="#555">A</text><path d="M20.5 11.5 L24 14 L20.5 16.5Z" fill="#111"/></svg></div>
<div class="inp" style="left:203px;top:563px;width:100px;height:19px;line-height:18px;">2901</div>
<div class="t" style="left:77px;top:590.5px;">Surface shader</div>
<div class="inp" style="left:164px;top:589px;width:331px;height:19px;line-height:18px;">Glass shader 02 (green)</div>
<div class="btn" style="left:506px;top:589px;width:20px;height:20px"><svg width="20" height="20" viewBox="0 0 20 20" style="position:absolute;left:-1px;top:-1px"><path d="M7.5 4h2.600v3.200h3.200v2.600h-3.200v3.200h-2.600v-3.200h-3.200v-2.600h3.200z" fill="#2fae2f" stroke="#1b7a1b" stroke-width=".7"/><path d="M13.5 12.500 L17 15 L13.500 17.500Z" fill="#111"/></svg></div>
<div class="pane" style="left:77px;top:634px;width:458px;height:177px;"></div>
<div class="tab" style="left:79px;top:615px;width:88px">Scale / Density</div>
<div class="tab" style="left:217px;top:615px;width:47px">Colour</div>
<div class="tab" style="left:263px;top:615px;width:63px">Functions</div>
<div class="tab sel" style="left:166px;top:612px;width:52px">Shape</div>
<div class="t" style="left:89px;top:651px;">Stone tallness</div>
<div class="btn fx" style="left:177px;top:649px;width:27px;height:20px;"><svg width="27" height="20" viewBox="0 0 27 20" style="position:absolute;left:-1px;top:-1px"><path d="M5.5 15.5 C9 15 10 11 11.5 7.5 C12.5 5 14 4.2 16.5 4" fill="none" stroke="#6a6a6a" stroke-width="1.3"/><text x="11" y="16.5" font-family="Liberation Sans,sans-serif" font-size="9" font-style="italic" font-weight="bold" fill="#555">A</text><path d="M20.5 11.5 L24 14 L20.5 16.5Z" fill="#111"/></svg></div>
<div class="inp" style="left:215px;top:649px;width:92px;height:19px;line-height:18px;">4</div>
<div class="trk" style="left:323px;top:658px;width:200px"></div>
<div class="t" style="left:89px;top:676.5px;">Pancake effect</div>
<div class="btn fx" style="left:177px;top:675px;width:27px;height:20px;"><svg width="27" height="20" viewBox="0 0 27 20" style="position:absolute;left:-1px;top:-1px"><path d="M5.5 15.5 C9 15 10 11 11.5 7.5 C12.5 5 14 4.2 16.5 4" fill="none" stroke="#6a6a6a" stroke-width="1.3"/><text x="11" y="16.5" font-family="Liberation Sans,sans-serif" font-size="9" font-style="italic" font-weight="bold" fill="#555">A</text><path d="M20.5 11.5 L24 14 L20.5 16.5Z" fill="#111"/></svg></div>
<div class="inp" style="left:215px;top:675px;width:92px;height:19px;line-height:18px;">0.875</div>
<div class="trk" style="left:323px;top:683.5px;width:200px"></div>
<div class="chk" style="left:89px;top:704px"><svg width="13" height="13" viewBox="0 0 13 13" style="position:absolute;left:-1px;top:-1px"><path d="M3.2 6.2 L5.4 9.6 L9.8 2.8" fill="none" stroke="#3a4f8c" stroke-width="1.9" stroke-linecap="round" stroke-linejoin="round"/></svg></div>
<div class="t" style="left:105px;top:703px;">Only displace upwards</div>
<div class="chk" style="left:77px;top:819px"></div>
<div class="t" style="left:93px;top:818px;">Mask by shader</div>
<div class="inp" style="left:229px;top:816px;width:266px;height:19px;line-height:18px;"></div>
<div class="chk" style="left:113px;top:845px"></div>
<div class="t" style="left:129px;top:843.5px;">Fit mask to this</div>
<div class="chk" style="left:320px;top:845px"></div>
<div class="chk" style="left:113px;top:871px"><svg width="13" height="13" viewBox="0 0 13 13" style="position:absolute;left:-1px;top:-1px"><path d="M3.2 6.2 L5.4 9.6 L9.8 2.8" fill="none" stroke="#3a4f8c" stroke-width="1.9" stroke-linecap="round" stroke-linejoin="round"/></svg></div>
<div class="t" style="left:129px;top:870px;">Mask as stone density</div>
<div style="left:615px;top:726px;width:485px;height:334px;background:rgba(255,255,255,.04);border:1px solid #6c718c;box-shadow:inset 0 0 0 1px rgba(255,255,255,.42),1px 2px 5px rgba(0,0,0,.3);backdrop-filter:blur(2px)"></div>
<div style="left:617px;top:728px;width:481px;height:22px;background:linear-gradient(90deg,rgba(255,255,255,.0) 0%,rgba(255,255,255,.02) 25%,rgba(255,255,255,.26) 100%)"></div>
<div style="left:616px;top:1026px;width:5px;height:22px;background:rgba(255,255,255,.72)"></div>
<div class="t" style="left:623px;top:730.5px;letter-spacing:-0.43px;font-size:12.3px"></div>
<div style="left:621px;top:750px;width:474px;height:305px;background:#f0f0f0;border:1px solid #454a5e"></div>
<div style="left:622px;top:751px;width:472px;height:19px;background:linear-gradient(#fafafd 0%,#eceff7 40%,#dde2f0 55%,#e3e7f3 100%);border-bottom:1px solid #b8bfd2"></div>
<div class="t" style="left:630px;top:753px;color:#7c7c7c;font-size:12.3px;letter-spacing:-0.1px">Edit</div>
<div class="clb" style="left:1079px;top:731px"><svg width="15" height="15" viewBox="0 0 15 15" style="position:absolute;left:-1px;top:-1px"><path d="M5 5 L10 10 M10 5 L5 10" stroke="#fff" stroke-width="1.8"/></svg></div>
<div class="stay" style="left:1024px;top:772px;width:58px;height:18px;line-height:16px"><span class="nar"><u>S</u>tay Open</span></div>
<div class="inp" style="left:700px;top:804px;width:289px;height:19px;line-height:18px;"></div>
<div class="btn" style="left:1000px;top:802px;width:22px;height:19px"><svg width="24" height="20" viewBox="0 0 24 20" style="position:absolute;left:-2px;top:-2px"><g transform="translate(10,9.5)"><circle r="4.9" fill="none" stroke="#707070" stroke-width="2.4" stroke-dasharray="2.1 1.75"/><circle r="3.9" fill="#858585"/><circle r="1.9" fill="#ececec"/></g><path d="M16.5 13.5h5l-2.5 3.2z" fill="#111"/></svg></div>
<div class="btn" style="left:1033px;top:802px;width:19px;height:19px"><div style="position:absolute;left:2px;top:2px;width:13px;height:13px;box-shadow:inset 0 0 0 1px #e8f4fb;border:1px solid #777;background:linear-gradient(135deg,#bfe6fb,#4fb2ea 60%,#7fd0f5)"></div></div>
<div class="btn" style="left:1063px;top:802px;width:19px;height:19px;line-height:17px;font-weight:bold;font-size:15px;color:#222"><span>?</span></div>
<div class="pane" style="left:633px;top:875px;width:448px;height:190px;"></div>
<div class="tab" style="left:780px;top:856px;width:48px;text-align:right;padding-right:6px">e</div>
<div class="tab" style="left:827px;top:856px;width:47px;text-align:left;padding-left:7px">Seed</div>
<div class="inp" style="left:790px;top:890.0px;width:94px;height:19px;line-height:18px;text-align:left;padding-left:28px"></div>
<div class="trk" style="left:901px;top:898.5px;width:161px"></div>
<div class="thb" style="left:1055.5px;top:892.0px"></div>
<div class="inp" style="left:790px;top:916.0px;width:94px;height:19px;line-height:18px;text-align:left;padding-left:28px">33</div>
<div class="trk" style="left:901px;top:924.5px;width:161px"></div>
<div class="thb" style="left:962.5px;top:918.0px"></div>
<div class="inp" style="left:790px;top:942.0px;width:94px;height:19px;line-height:18px;text-align:left;padding-left:28px">5</div>
<div class="trk" style="left:901px;top:950.5px;width:161px"></div>
<div class="thb" style="left:978.5px;top:944.0px"></div>
<div style="left:640px;top:972px;width:428px;height:1px;background:#a8a8a8"></div>
<div style="left:640px;top:973px;width:428px;height:1px;background:#fdfdfd"></div>
<div class="inp" style="left:790px;top:984px;width:94px;height:19px;line-height:18px;"></div>
<div class="trk" style="left:901px;top:992px;width:161px"></div>
<div class="thb" style="left:1009.5px;top:985.5px"></div>
<div class="t" style="left:645px;top:1012px;">Min highlight spread</div>
<div class="btn fx" style="left:766px;top:1010px;width:27px;height:20px;"><svg width="27" height="20" viewBox="0 0 27 20" style="position:absolute;left:-1px;top:-1px"><path d="M5.5 15.5 C9 15 10 11 11.5 7.5 C12.5 5 14 4.2 16.5 4" fill="none" stroke="#6a6a6a" stroke-width="1.3"/><text x="11" y="16.5" font-family="Liberation Sans,sans-serif" font-size="9" font-style="italic" font-weight="bold" fill="#555">A</text><path d="M20.5 11.5 L24 14 L20.5 16.5Z" fill="#111"/></svg></div>
<div class="inp" style="left:804px;top:1010px;width:80px;height:19px;line-height:18px;">0.01</div>
<div class="trk" style="left:901px;top:1018.5px;width:161px"></div>
<div class="thb" style="left:900.5px;top:1012.0px"></div>
<div style="left:333px;top:597px;width:484px;height:413px;background:rgba(255,255,255,.04);border:1px solid #6c718c;box-shadow:inset 0 0 0 1px rgba(255,255,255,.42),1px 2px 5px rgba(0,0,0,.3);backdrop-filter:blur(2px)"></div>
<div style="left:335px;top:599px;width:480px;height:22px;background:linear-gradient(90deg,rgba(255,255,255,.0) 0%,rgba(255,255,255,.02) 25%,rgba(255,255,255,.26) 100%)"></div>
<div style="left:334px;top:598px;width:202px;height:23px;background:rgba(255,255,255,.72)"></div>
<div style="left:334px;top:621px;width:5px;height:388px;background:rgba(255,255,255,.72)"></div>
<div style="left:339px;top:1005px;width:131px;height:4px;background:rgba(255,255,255,.72)"></div>
<div style="left:617px;top:1005px;width:199px;height:4px;background:rgba(255,255,255,.72)"></div>
<div style="left:812px;top:752px;width:4px;height:253px;background:rgba(255,255,255,.72)"></div>
<div class="t" style="left:341px;top:601.5px;letter-spacing:-0.43px;font-size:12.3px">Glass shader 02 (Rubin_Diamant_rot)     (Glass shader)</div>
<div style="left:339px;top:621px;width:473px;height:384px;background:#f0f0f0;border:1px solid #454a5e"></div>
<div style="left:340px;top:622px;width:471px;height:19px;background:linear-gradient(#fafafd 0%,#eceff7 40%,#dde2f0 55%,#e3e7f3 100%);border-bottom:1px solid #b8bfd2"></div>
<div class="t" style="left:348px;top:624px;color:#7c7c7c;font-size:12.3px;letter-spacing:-0.1px">Edit</div>
<div class="clb" style="left:796px;top:602px"><svg width="15" height="15" viewBox="0 0 15 15" style="position:absolute;left:-1px;top:-1px"><path d="M5 5 L10 10 M10 5 L5 10" stroke="#fff" stroke-width="1.8"/></svg></div>
<div style="left:536px;top:598px;width:13px;height:23px;background:linear-gradient(90deg,rgba(255,255,255,.72),rgba(255,255,255,0))"></div>
<div class="stay" style="left:741px;top:643px;width:58px;height:18px;line-height:16px"><span class="nar"><u>S</u>tay Open</span></div>
<div class="t" style="left:350px;top:677px;">Name</div>
<div class="inp" style="left:392px;top:675px;width:314px;height:19px;line-height:18px;">Glass shader 02 (green)</div>
<div class="btn" style="left:717px;top:673px;width:22px;height:19px"><svg width="24" height="20" viewBox="0 0 24 20" style="position:absolute;left:-2px;top:-2px"><g transform="translate(10,9.5)"><circle r="4.9" fill="none" stroke="#707070" stroke-width="2.4" stroke-dasharray="2.1 1.75"/><circle r="3.9" fill="#858585"/><circle r="1.9" fill="#ececec"/></g><path d="M16.5 13.5h5l-2.5 3.2z" fill="#111"/></svg></div>
<div class="btn" style="left:751px;top:673px;width:18px;height:19px"><div style="position:absolute;left:2px;top:2px;width:12px;height:13px;box-shadow:inset 0 0 0 1px #e8f4fb;border:1px solid #777;background:linear-gradient(135deg,#bfe6fb,#4fb2ea 60%,#7fd0f5)"></div></div>
<div class="btn" style="left:781px;top:673px;width:18px;height:19px;line-height:17px;font-weight:bold;font-size:15px;color:#222"><span>?</span></div>
<div class="chk" style="left:350px;top:704px"><svg width="13" height="13" viewBox="0 0 13 13" style="position:absolute;left:-1px;top:-1px"><path d="M3.2 6.2 L5.4 9.6 L9.8 2.8" fill="none" stroke="#3a4f8c" stroke-width="1.9" stroke-linecap="round" stroke-linejoin="round"/></svg></div>
<div class="t" style="left:366px;top:703px;">Enable</div>
<div class="pane" style="left:350px;top:746px;width:448px;height:246px;"></div>
<div class="tab" style="left:352px;top:727px;width:47px">Main</div>
<div class="tab sel" style="left:398px;top:724px;width:79px">Sub-surface</div>
<div class="t" style="left:362px;top:763px;">Decay distance</div>
<div class="btn fx" style="left:464px;top:761px;width:27px;height:20px;"><svg width="27" height="20" viewBox="0 0 27 20" style="position:absolute;left:-1px;top:-1px"><path d="M5.5 15.5 C9 15 10 11 11.5 7.5 C12.5 5 14 4.2 16.5 4" fill="none" stroke="#6a6a6a" stroke-width="1.3"/><text x="11" y="16.5" font-family="Liberation Sans,sans-serif" font-size="9" font-style="italic" font-weight="bold" fill="#555">A</text><path d="M20.5 11.5 L24 14 L20.5 16.5Z" fill="#111"/></svg></div>
<div class="inp" style="left:502px;top:761px;width:88px;height:19px;line-height:18px;">6.14125</div>
<div class="trk" style="left:606px;top:769px;width:173px"></div>
<div class="thb" style="left:747.5px;top:762.5px"></div>
<div class="t" style="left:362px;top:789px;">Decay tint</div>
<div class="btn fx" style="left:464px;top:787px;width:27px;height:20px;"><svg width="27" height="20" viewBox="0 0 27 20" style="position:absolute;left:-1px;top:-1px"><path d="M5.5 15.5 C9 15 10 11 11.5 7.5 C12.5 5 14 4.2 16.5 4" fill="none" stroke="#6a6a6a" stroke-width="1.3"/><text x="11" y="16.5" font-family="Liberation Sans,sans-serif" font-size="9" font-style="italic" font-weight="bold" fill="#555">A</text><path d="M20.5 11.5 L24 14 L20.5 16.5Z" fill="#111"/></svg></div>
<div class="inp" style="left:502px;top:787px;width:88px;height:19px;line-height:18px;">1</div>
<div class="trk" style="left:606px;top:795.5px;width:143px"></div>
<div class="thb" style="left:742.5px;top:789.0px"></div>
<div style="left:767px;top:789px;width:18px;height:18px;border:1px solid #6e6e6e;border-radius:2px;background:#5ae65a;box-shadow:inset 0 0 0 1px #d8ffd8"></div>
<div style="left:362px;top:817px;width:423px;height:1px;background:#a8a8a8"></div>
<div style="left:362px;top:818px;width:423px;height:1px;background:#fdfdfd"></div>
<div class="t" style="left:362px;top:831px;">Volume 1 density</div>
<div class="btn fx" style="left:464px;top:829px;width:27px;height:20px;"><svg width="27" height="20" viewBox="0 0 27 20" style="position:absolute;left:-1px;top:-1px"><path d="M5.5 15.5 C9 15 10 11 11.5 7.5 C12.5 5 14 4.2 16.5 4" fill="none" stroke="#6a6a6a" stroke-width="1.3"/><text x="11" y="16.5" font-family="Liberation Sans,sans-serif" font-size="9" font-style="italic" font-weight="bold" fill="#555">A</text><path d="M20.5 11.5 L24 14 L20.5 16.5Z" fill="#111"/></svg></div>
<div class="inp" style="left:502px;top:829px;width:88px;height:19px;line-height:18px;">0</div>
<div class="trk" style="left:606px;top:837px;width:173px"></div>
<div class="thb" style="left:605.5px;top:830.5px"></div>
<div class="t" style="left:362px;top:857px;">Volume 1 colour</div>
<div class="btn fx" style="left:464px;top:855px;width:27px;height:20px;"><svg width="27" height="20" viewBox="0 0 27 20" style="position:absolute;left:-1px;top:-1px"><path d="M5.5 15.5 C9 15 10 11 11.5 7.5 C12.5 5 14 4.2 16.5 4" fill="none" stroke="#6a6a6a" stroke-width="1.3"/><text x="11" y="16.5" font-family="Liberation Sans,sans-serif" font-size="9" font-style="italic" font-weight="bold" fill="#555">A</text><path d="M20.5 11.5 L24 14 L20.5 16.5Z" fill="#111"/></svg></div>
<div class="inp" style="left:502px;top:855px;width:88px;height:19px;line-height:18px;">0.5</div>
<div class="trk" style="left:606px;top:863.5px;width:143px"></div>
<div class="thb" style="left:674.5px;top:857.0px"></div>
<div style="left:767px;top:856px;width:18px;height:18px;border:1px solid #6e6e6e;border-radius:2px;background:#b9b9b9;box-shadow:inset 0 0 0 1px #e8e8e8"></div>
<div class="t" style="left:362px;top:883px;">Volume 1 density function</div>
<div class="inp" style="left:511px;top:881px;width:243px;height:19px;line-height:18px;"></div>
<div class="btn" style="left:765px;top:881px;width:20px;height:20px"><svg width="20" height="20" viewBox="0 0 20 20" style="position:absolute;left:-1px;top:-1px"><path d="M7.5 4h2.600v3.200h3.200v2.600h-3.200v3.200h-2.600v-3.200h-3.200v-2.600h3.200z" fill="#2fae2f" stroke="#1b7a1b" stroke-width=".7"/><path d="M13.5 12.500 L17 15 L13.500 17.500Z" fill="#111"/></svg></div>
<div class="t" style="left:362px;top:909px;">Volume 1 colour function</div>
<div class="inp" style="left:511px;top:907px;width:243px;height:19px;line-height:18px;"></div>
<div class="btn" style="left:765px;top:907px;width:20px;height:20px"><svg width="20" height="20" viewBox="0 0 20 20" style="position:absolute;left:-1px;top:-1px"><path d="M7.5 4h2.600v3.200h3.200v2.600h-3.200v3.200h-2.600v-3.200h-3.200v-2.600h3.200z" fill="#2fae2f" stroke="#1b7a1b" stroke-width=".7"/><path d="M13.5 12.500 L17 15 L13.500 17.500Z" fill="#111"/></svg></div>
<div style="left:1435px;top:469px;width:485px;height:591px;background:rgba(255,255,255,.04);border:1px solid #6c718c;box-shadow:inset 0 0 0 1px rgba(255,255,255,.42),1px 2px 5px rgba(0,0,0,.3);backdrop-filter:blur(2px)"></div>
<div style="left:1437px;top:471px;width:481px;height:22px;background:linear-gradient(90deg,rgba(255,255,255,.0) 0%,rgba(255,255,255,.02) 25%,rgba(255,255,255,.26) 100%)"></div>
<div class="t" style="left:1443px;top:473.5px;letter-spacing:-0.43px;font-size:12.3px">Render 01     (Render)</div>
<div style="left:1441px;top:493px;width:474px;height:562px;background:#f0f0f0;border:1px solid #454a5e"></div>
<div style="left:1442px;top:494px;width:472px;height:19px;background:linear-gradient(#fafafd 0%,#eceff7 40%,#dde2f0 55%,#e3e7f3 100%);border-bottom:1px solid #b8bfd2"></div>
<div class="t" style="left:1450px;top:496px;color:#7c7c7c;font-size:12.3px;letter-spacing:-0.1px">Edit</div>
<div class="clb" style="left:1898px;top:474px"><svg width="15" height="15" viewBox="0 0 15 15" style="position:absolute;left:-1px;top:-1px"><path d="M5 5 L10 10 M10 5 L5 10" stroke="#fff" stroke-width="1.8"/></svg></div>
<div class="stay" style="left:1843px;top:515px;width:58px;height:18px;line-height:16px"><span class="nar"><u>S</u>tay Open</span></div>
<div class="t" style="left:1452px;top:548.5px;">Name</div>
<div class="inp" style="left:1494px;top:547px;width:344px;height:19px;line-height:18px;">Render 01</div>
<div class="btn" style="left:1849px;top:545px;width:22px;height:19px"><svg width="24" height="20" viewBox="0 0 24 20" style="position:absolute;left:-2px;top:-2px"><g transform="translate(10,9.5)"><circle r="4.9" fill="none" stroke="#707070" stroke-width="2.4" stroke-dasharray="2.1 1.75"/><circle r="3.9" fill="#858585"/><circle r="1.9" fill="#ececec"/></g><path d="M16.5 13.5h5l-2.5 3.2z" fill="#111"/></svg></div>
<div class="btn" style="left:1883px;top:545px;width:18px;height:19px;line-height:17px;font-weight:bold;font-size:15px;color:#222"><span>?</span></div>
<div class="chk" style="left:1452px;top:576px"><svg width="13" height="13" viewBox="0 0 13 13" style="position:absolute;left:-1px;top:-1px"><path d="M3.2 6.2 L5.4 9.6 L9.8 2.8" fill="none" stroke="#3a4f8c" stroke-width="1.9" stroke-linecap="round" stroke-linejoin="round"/></svg></div>
<div class="t" style="left:1468px;top:575px;">Master</div>
<div class="t" style="left:1452px;top:601px;">Image width</div>
<div class="btn fx" style="left:1551px;top:599px;width:27px;height:20px;"><svg width="27" height="20" viewBox="0 0 27 20" style="position:absolute;left:-1px;top:-1px"><path d="M5.5 15.5 C9 15 10 11 11.5 7.5 C12.5 5 14 4.2 16.5 4" fill="none" stroke="#6a6a6a" stroke-width="1.3"/><text x="11" y="16.5" font-family="Liberation Sans,sans-serif" font-size="9" font-style="italic" font-weight="bold" fill="#555">A</text><path d="M20.5 11.5 L24 14 L20.5 16.5Z" fill="#111"/></svg></div>
<div class="inp" style="left:1589px;top:599px;width:97px;height:19px;line-height:18px;">600</div>
<div class="chk" style="left:1694px;top:602px"><svg width="13" height="13" viewBox="0 0 13 13" style="position:absolute;left:-1px;top:-1px"><path d="M3.2 6.2 L5.4 9.6 L9.8 2.8" fill="none" stroke="#3a4f8c" stroke-width="1.9" stroke-linecap="round" stroke-linejoin="round"/></svg></div>
<div class="t" style="left:1710px;top:601px;">Lock aspect ratio</div>
<div class="t" style="left:1452px;top:627px;">Image height</div>
<div class="btn fx" style="left:1551px;top:625px;width:27px;height:20px;"><svg width="27" height="20" viewBox="0 0 27 20" style="position:absolute;left:-1px;top:-1px"><path d="M5.5 15.5 C9 15 10 11 11.5 7.5 C12.5 5 14 4.2 16.5 4" fill="none" stroke="#6a6a6a" stroke-width="1.3"/><text x="11" y="16.5" font-family="Liberation Sans,sans-serif" font-size="9" font-style="italic" font-weight="bold" fill="#555">A</text><path d="M20.5 11.5 L24 14 L20.5 16.5Z" fill="#111"/></svg></div>
<div class="inp" style="left:1589px;top:625px;width:97px;height:19px;line-height:18px;">337</div>
<div class="inp" style="left:1694px;top:625px;width:62px;height:19px;line-height:18px;">1.77778</div>
<div class="trk" style="left:1772px;top:633.5px;width:124px"></div>
<div class="thb" style="left:1823.5px;top:627.0px"></div>
<div class="t" style="left:1452px;top:653px;">Pixel aspect ratio</div>
<div class="btn fx" style="left:1551px;top:651px;width:27px;height:20px;"><svg width="27" height="20" viewBox="0 0 27 20" style="position:absolute;left:-1px;top:-1px"><path d="M5.5 15.5 C9 15 10 11 11.5 7.5 C12.5 5 14 4.2 16.5 4" fill="none" stroke="#6a6a6a" stroke-width="1.3"/><text x="11" y="16.5" font-family="Liberation Sans,sans-serif" font-size="9" font-style="italic" font-weight="bold" fill="#555">A</text><path d="M20.5 11.5 L24 14 L20.5 16.5Z" fill="#111"/></svg></div>
<div class="inp" style="left:1589px;top:651px;width:97px;height:19px;line-height:18px;">1</div>
<div class="trk" style="left:1702px;top:659.5px;width:194px"></div>
<div class="thb" style="left:1795.5px;top:653.0px"></div>
<div class="t" style="left:1452px;top:679px;">Camera</div>
<div class="inp" style="left:1550px;top:677px;width:320px;height:19px;line-height:18px;">Render Camera</div>
<div class="btn" style="left:1881px;top:677px;width:20px;height:20px"><svg width="20" height="20" viewBox="0 0 20 20" style="position:absolute;left:-1px;top:-1px"><path d="M7.5 4h2.600v3.200h3.200v2.600h-3.200v3.200h-2.600v-3.200h-3.200v-2.600h3.200z" fill="#2fae2f" stroke="#1b7a1b" stroke-width=".7"/><path d="M13.5 12.500 L17 15 L13.500 17.500Z" fill="#111"/></svg></div>
<div class="t" style="left:1452px;top:705px;">Render layer</div>
<div class="inp" style="left:1550px;top:703px;width:320px;height:19px;line-height:18px;"></div>
<div class="btn" style="left:1881px;top:703px;width:20px;height:20px"><svg width="20" height="20" viewBox="0 0 20 20" style="position:absolute;left:-1px;top:-1px"><path d="M7.5 4h2.600v3.200h3.200v2.600h-3.200v3.200h-2.600v-3.200h-3.200v-2.600h3.200z" fill="#2fae2f" stroke="#1b7a1b" stroke-width=".7"/><path d="M13.5 12.500 L17 15 L13.500 17.500Z" fill="#111"/></svg></div>
<div class="chk" style="left:1452px;top:732px"><svg width="13" height="13" viewBox="0 0 13 13" style="position:absolute;left:-1px;top:-1px"><path d="M3.2 6.2 L5.4 9.6 L9.8 2.8" fill="none" stroke="#3a4f8c" stroke-width="1.9" stroke-linecap="round" stroke-linejoin="round"/></svg></div>
<div class="t" style="left:1468px;top:731px;">Surfaces visible</div>
<div class="chk" style="left:1586px;top:732px"><svg width="13" height="13" viewBox="0 0 13 13" style="position:absolute;left:-1px;top:-1px"><path d="M3.2 6.2 L5.4 9.6 L9.8 2.8" fill="none" stroke="#3a4f8c" stroke-width="1.9" stroke-linecap="round" stroke-linejoin="round"/></svg></div>
<div class="t" style="left:1602px;top:731px;">Atmo/cloud visible</div>
<div class="chk" style="left:1452px;top:758px"><svg width="13" height="13" viewBox="0 0 13 13" style="position:absolute;left:-1px;top:-1px"><path d="M3.2 6.2 L5.4 9.6 L9.8 2.8" fill="none" stroke="#3a4f8c" stroke-width="1.9" stroke-linecap="round" stroke-linejoin="round"/></svg></div>
<div class="t" style="left:1468px;top:757px;">Do shadows</div>
<div class="btn" style="left:1535px;top:782px;width:118px;height:18px;line-height:16px;"><span style=""><span class="nar" style="font-size:12.5px">Render Image</span></span></div>
<div class="btn" style="left:1700px;top:782px;width:118px;height:18px;line-height:16px;"><span style=""><span class="nar" style="font-size:12.5px">Render All To Disk</span></span></div>
<div class="pane" style="left:1452px;top:833px;width:448px;height:230px;"></div>
<div class="tab" style="left:1505px;top:813px;width:47px">Crop</div>
<div class="tab" style="left:1552px;top:813px;width:48px">Filter</div>
<div class="tab" style="left:1600px;top:813px;width:63px">Tonemap</div>
<div class="tab" style="left:1663px;top:813px;width:65px">Advanced</div>
<div class="tab" style="left:1728px;top:813px;width:104px">Sequence/Output</div>
<div class="tab sel" style="left:1452px;top:810px;width:54px">Quality</div>
<div class="t" style="left:1464px;top:849px;">Micropoly detail</div>
<div class="btn fx" style="left:1561px;top:847px;width:27px;height:20px;"><svg width="27" height="20" viewBox="0 0 27 20" style="position:absolute;left:-1px;top:-1px"><path d="M5.5 15.5 C9 15 10 11 11.5 7.5 C12.5 5 14 4.2 16.5 4" fill="none" stroke="#6a6a6a" stroke-width="1.3"/><text x="11" y="16.5" font-family="Liberation Sans,sans-serif" font-size="9" font-style="italic" font-weight="bold" fill="#555">A</text><path d="M20.5 11.5 L24 14 L20.5 16.5Z" fill="#111"/></svg></div>
<div class="inp" style="left:1599px;top:847px;width:89px;height:19px;line-height:18px;">0.4</div>
<div class="trk" style="left:1704px;top:855.5px;width:177px"></div>
<div class="thb" style="left:1789.5px;top:849.0px"></div>
<div class="t" style="left:1464px;top:875px;">Anti-aliasing</div>
<div class="btn fx" style="left:1561px;top:873px;width:27px;height:20px;"><svg width="27" height="20" viewBox="0 0 27 20" style="position:absolute;left:-1px;top:-1px"><path d="M5.5 15.5 C9 15 10 11 11.5 7.5 C12.5 5 14 4.2 16.5 4" fill="none" stroke="#6a6a6a" stroke-width="1.3"/><text x="11" y="16.5" font-family="Liberation Sans,sans-serif" font-size="9" font-style="italic" font-weight="bold" fill="#555">A</text><path d="M20.5 11.5 L24 14 L20.5 16.5Z" fill="#111"/></svg></div>
<div class="inp" style="left:1599px;top:873px;width:89px;height:19px;line-height:18px;">4</div>
<div class="trk" style="left:1704px;top:881.5px;width:177px"></div>
<div class="thb" style="left:1776.5px;top:875.0px"></div>
<div class="chk" style="left:1464px;top:903px"><svg width="13" height="13" viewBox="0 0 13 13" style="position:absolute;left:-1px;top:-1px"><path d="M3.2 6.2 L5.4 9.6 L9.8 2.8" fill="none" stroke="#3a4f8c" stroke-width="1.9" stroke-linecap="round" stroke-linejoin="round"/></svg></div>
<div class="t" style="left:1480px;top:901px;">Defer atmo/cloud</div>
<div class="btn" style="left:1769px;top:900px;width:118px;height:18px;line-height:16px;"><span style=""><span class="nar" style="font-size:12.5px">Edit Sampling...</span></span></div>
<div class="chk dis" style="left:1464px;top:929px"></div>
<div class="t" style="left:1480px;top:927px;color:#8a8a8a">Defer all shading</div>
<div class="chk" style="left:1464px;top:955px"><svg width="13" height="13" viewBox="0 0 13 13" style="position:absolute;left:-1px;top:-1px"><path d="M3.2 6.2 L5.4 9.6 L9.8 2.8" fill="none" stroke="#3a4f8c" stroke-width="1.9" stroke-linecap="round" stroke-linejoin="round"/></svg></div>
<div class="t" style="left:1480px;top:953.5px;">Motion blur</div>
<div class="btn fx" style="left:1561px;top:951px;width:27px;height:20px;"><svg width="27" height="20" viewBox="0 0 27 20" style="position:absolute;left:-1px;top:-1px"><path d="M5.5 15.5 C9 15 10 11 11.5 7.5 C12.5 5 14 4.2 16.5 4" fill="none" stroke="#6a6a6a" stroke-width="1.3"/><text x="11" y="16.5" font-family="Liberation Sans,sans-serif" font-size="9" font-style="italic" font-weight="bold" fill="#555">A</text><path d="M20.5 11.5 L24 14 L20.5 16.5Z" fill="#111"/></svg></div>
<div class="btn" style="left:1599px;top:949px;width:110px;height:23px;text-align:left;padding-left:3px;line-height:21px;letter-spacing:-0.2px">3D motion blur<svg width="9" height="5" style="position:absolute;right:5px;top:8px"><path d="M0 0h9l-4.500 5z" fill="#111"/></svg></div>
<div class="chk" style="left:1464px;top:981px"></div>
<div class="t" style="left:1480px;top:979px;">Depth of field</div>
<div class="btn fx" style="left:1561px;top:977px;width:27px;height:20px;"><svg width="27" height="20" viewBox="0 0 27 20" style="position:absolute;left:-1px;top:-1px"><path d="M5.5 15.5 C9 15 10 11 11.5 7.5 C12.5 5 14 4.2 16.5 4" fill="none" stroke="#6a6a6a" stroke-width="1.3"/><text x="11" y="16.5" font-family="Liberation Sans,sans-serif" font-size="9" font-style="italic" font-weight="bold" fill="#555">A</text><path d="M20.5 11.5 L24 14 L20.5 16.5Z" fill="#111"/></svg></div>
<div class="btn" style="left:1599px;top:975px;width:179px;height:23px;text-align:left;padding-left:3px;line-height:21px;letter-spacing:-0.2px;color:#8a8a8a;border-color:#b8b8b8;background:#f3f3f3">3D DoF with noise reduction<svg width="9" height="5" style="position:absolute;right:6px;top:9px"><path d="M0 0h8l-4 4.500z" fill="#9a9a9a"/></svg></div>
<div class="t" style="left:1464px;top:1011px;">Global Illumination</div>
<div style="left:1567px;top:1023px;width:320px;height:1px;background:#a8a8a8"></div>
<div style="left:1567px;top:1024px;width:320px;height:1px;background:#fdfdfd"></div>
<div class="btn" style="left:1769px;top:1036px;width:118px;height:18px;line-height:16px;"><span style=""><span class="nar" style="font-size:12.5px">GI Settings</span></span></div>
<div style="left:246px;top:62px;width:633px;height:413px;border-radius:7px 7px 5px 5px;background:linear-gradient(90deg,rgba(255,255,255,.35),rgba(255,255,255,0) 35%),linear-gradient(rgba(226,243,251,.9) 0px,rgba(214,239,250,.84) 28px,rgba(208,234,247,.7) 60px,rgba(204,231,247,.66) 100%);border:1px solid rgba(70,90,110,.85);box-shadow:inset 0 0 0 1px rgba(255,255,255,.8),0 0 0 1px rgba(255,255,255,.25),0 3px 10px rgba(0,0,0,.35);backdrop-filter:blur(4px)"></div>
<div style="left:872px;top:90px;width:6px;height:309px;background:linear-gradient(90deg,#9fb2c4,#8194a8 40%,#7d90a4);"></div>
<div style="left:872px;top:426px;width:6px;height:43px;background:linear-gradient(90deg,#6c7cb8,#4a5aa0 50%,#44549a)"></div>
<div style="left:548px;top:469px;width:330px;height:5px;background:linear-gradient(#7f8ec6 0%,#4757a0 30%,#3f4f98 80%,#7886c0 100%)"></div>
<div style="left:536px;top:469px;width:14px;height:5px;background:linear-gradient(90deg,rgba(71,87,160,0),#4757a0)"></div>
<div style="left:430px;top:64px;width:350px;height:26px;overflow:hidden"><div style="left:0;top:0;width:350px;height:26px;background:linear-gradient(90deg,rgba(190,218,246,0),rgba(190,218,246,.55) 12%,rgba(190,218,246,.55) 92%,rgba(190,218,246,.2))"></div><div style="left:0;top:0;width:350px;height:26px;filter:blur(3px)"><div style="left:42px;top:6px;width:56px;height:16px;background:#7cbcf0;border-radius:3px"></div><div style="left:56px;top:11px;width:30px;height:6px;background:#55799c"></div><div style="left:105px;top:6px;width:55px;height:16px;background:#eef6fd;border-radius:3px"></div><div style="left:118px;top:11px;width:25px;height:6px;background:#768496"></div><div style="left:170px;top:11px;width:20px;height:5px;background:#a4b2c4"></div><div style="left:203px;top:9px;width:12px;height:10px;background:#92cea2"></div><div style="left:240px;top:8px;width:20px;height:10px;background:#f2dcd2"></div><div style="left:265px;top:8px;width:10px;height:11px;background:#62b4f0"></div><div style="left:300px;top:8px;width:25px;height:12px;background:#86c6f0"></div></div></div>
<svg style="position:absolute;left:253px;top:69px" width="16" height="16" viewBox="0 0 16 16"><rect width="16" height="16" fill="#3e8fd6"/><rect x=".5" y=".5" width="15" height="15" fill="none" stroke="#2f7ac0"/><path d="M1.500 12.500 L7 5.500 L9.500 8.500 L11 7 L14.500 12.500Z" fill="#fff"/><circle cx="12.500" cy="4" r="1.200" fill="#fff"/></svg>
<div class="t" style="left:274px;top:69px;letter-spacing:-0.38px;font-size:12.3px">Render View: 600x337 @ 100%</div>
<div style="left:770px;top:62px;width:102px;height:20px;border:1px solid #6f8496;border-top:none;border-radius:0 0 5px 5px;background:linear-gradient(rgba(255,255,255,.65),rgba(235,246,252,.35) 50%,rgba(255,255,255,.45));box-shadow:inset 0 0 0 1px rgba(255,255,255,.7)"></div>
<div style="left:797px;top:62px;width:1px;height:19px;background:#8497a8"></div>
<div style="left:824px;top:62px;width:1px;height:19px;background:#8497a8"></div>
<svg style="position:absolute;left:770px;top:62px" width="102" height="20" viewBox="0 0 102 20"><rect x="8.500" y="10.500" width="11" height="4" rx="1" fill="#fff" stroke="#555"/><rect x="36.500" y="5.500" width="10" height="8" rx="1" fill="#fff" stroke="#555"/><rect x="39.500" y="8.500" width="4" height="2.500" fill="#fff" stroke="#555"/><path d="M73 5.500 L76 5.500 L78.500 8.200 L81 5.500 L84 5.500 L80.300 9.700 L84 14 L81 14 L78.500 11.300 L76 14 L73 14 L76.700 9.700Z" fill="#fff" stroke="#555"/></svg>
<div style="left:252px;top:91px;width:620px;height:377px;background:#f0f0f0;border:1px solid #6a7682"></div>
<div class="btn" style="left:254px;top:94px;width:77px;height:17px;line-height:15px;"><span style=""><span class="nar" style="font-size:12.5px"><u>R</u>ender</span></span></div>
<div class="btn" style="left:334px;top:94px;width:77px;height:17px;line-height:15px;"><span style=""><span class="nar" style="font-size:12.5px"><u>S</u>ave...</span></span></div>
<div class="btn" style="left:414px;top:94px;width:21px;height:17px"><svg width="21" height="17" viewBox="0 0 21 17" style="position:absolute;left:-1px;top:-1px"><circle cx="8" cy="7" r="2.600" fill="#ddd" stroke="#444" stroke-width="1.200"/><path d="M10 9l3 3" stroke="#444" stroke-width="1.800"/><path d="M15.500 9l3.500 2.500-3.500 2.500z" fill="#111"/></svg></div>
<div class="btn" style="left:438px;top:93px;width:22px;height:18px"><svg width="22" height="18" viewBox="0 0 22 18" style="position:absolute;left:-1px;top:-1px"><circle cx="8" cy="7" r="4.500" fill="#e83030" opacity=".9"/><circle cx="13.500" cy="7" r="4.500" fill="#30a0f0" opacity=".85"/><circle cx="10.500" cy="11.500" r="4.500" fill="#38c038" opacity=".85"/><circle cx="10.500" cy="8.500" r="1.800" fill="#fff"/></svg></div>
<svg style="position:absolute;left:472px;top:93px" width="17" height="19" viewBox="0 0 17 19"><rect x=".5" y=".5" width="16" height="18" rx="2" fill="#f4f4f4" stroke="#8a8a8a"/><path d="M4.500 3.500h6l2.500 2.500v9.500h-8.500z" fill="#fff" stroke="#2f7a4a"/><path d="M6 9h5M6 11h5M6 13h5" stroke="#2f9a5a"/></svg>
<div class="t" style="left:501px;top:93.5px;letter-spacing:-0.22px">Finished rendering:  0:02:28s, 195978 micro-triangles</div>
<div style="left:253px;top:112px;width:600px;height:337px;background:#0b0708"></div>
<div style="left:601px;top:112px;width:252px;height:337px;background:linear-gradient(90deg,#120a0c 0%,#0b0607 30%,#070405 100%)"></div>
<div style="left:853px;top:112px;width:18px;height:337px;background:#f0f0f0"></div>
<div style="left:253px;top:449px;width:618px;height:18px;background:#f0f0f0"></div>
<svg style="position:absolute;left:857px;top:118px" width="10" height="6"><path d="M0 5.500l5-5 5 5z" fill="#b8b8b8"/><path d="M2 5.500h6" stroke="#8a8a8a"/></svg>
<svg style="position:absolute;left:857px;top:439px" width="10" height="6"><path d="M0 .5l5 5 5-5z" fill="#b8b8b8"/><path d="M2 .5h6" stroke="#8a8a8a"/></svg>
<svg style="position:absolute;left:258px;top:453px" width="6" height="10"><path d="M5.500 0l-5 5 5 5z" fill="#b0b0b0"/></svg>
<svg style="position:absolute;left:842px;top:453px" width="6" height="10"><path d="M.5 0l5 5-5 5z" fill="#b0b0b0"/></svg>
<svg style="position:absolute;left:301px;top:112px" width="300" height="337" viewBox="0 0 300 337"><defs><linearGradient id="sky" x1="0" y1="0" x2="1" y2="1"><stop offset="0" stop-color="#5e4c68"/><stop offset=".5" stop-color="#705a72"/><stop offset="1" stop-color="#80667a"/></linearGradient><linearGradient id="wat" x1="0" y1="0" x2="0" y2="1"><stop offset="0" stop-color="#9c8292"/><stop offset=".1" stop-color="#836c7e"/><stop offset=".35" stop-color="#725f72"/><stop offset=".7" stop-color="#625467"/><stop offset="1" stop-color="#54485c"/></linearGradient><linearGradient id="wl" x1="0" y1="0" x2="1" y2="0"><stop offset="0" stop-color="#2a2030" stop-opacity=".35"/><stop offset=".5" stop-color="#2a2030" stop-opacity=".05"/><stop offset="1" stop-color="#fff" stop-opacity=".08"/></linearGradient><radialGradient id="sun" cx=".5" cy=".5" r=".5"><stop offset="0" stop-color="#fff" stop-opacity=".95"/><stop offset=".4" stop-color="#f0d4dc" stop-opacity=".6"/><stop offset="1" stop-color="#c0a0b0" stop-opacity="0"/></radialGradient><filter id="b3" x="-20%" y="-20%" width="140%" height="140%"><feGaussianBlur stdDeviation="2.200"/></filter><filter id="b6" x="-30%" y="-30%" width="160%" height="160%"><feGaussianBlur stdDeviation="6"/></filter><filter id="b1"><feGaussianBlur stdDeviation=".8"/></filter><clipPath id="cs"><rect width="300" height="337"/></clipPath></defs><g clip-path="url(#cs)"><rect width="300" height="337" fill="url(#sky)"/><ellipse cx="240" cy="8" rx="120" ry="55" fill="#c0a0b4" opacity=".6" filter="url(#b6)"/><ellipse cx="280" cy="20" rx="30" ry="40" fill="#d4b8c6" opacity=".55" filter="url(#b6)"/><ellipse cx="285" cy="70" rx="40" ry="50" fill="#6e5870" opacity=".6" filter="url(#b6)"/><g filter="url(#b3)" stroke-linecap="round" fill="none"><path d="M174.3 75.4L31.0 81.3" stroke="#b496a8" stroke-width="1.4" opacity="0.49"/><path d="M206.9 72.0L-105.7 71.9" stroke="#e2c8d2" stroke-width="1.4" opacity="0.48"/><path d="M161.0 70.5L-18.4 67.7" stroke="#ccaebe" stroke-width="1.5" opacity="0.73"/><path d="M179.3 66.9L47.3 58.3" stroke="#ccaebe" stroke-width="1.3" opacity="0.47"/><path d="M212.4 67.1L7.3 45.1" stroke="#c2a4b6" stroke-width="1.5" opacity="0.70"/><path d="M180.8 61.7L41.4 43.0" stroke="#d8bac8" stroke-width="1.7" opacity="0.70"/><path d="M208.1 64.8L49.4 41.9" stroke="#e2c8d2" stroke-width="3.1" opacity="0.80"/><path d="M197.0 60.3L-101.6 2.9" stroke="#ccaebe" stroke-width="1.9" opacity="0.76"/><path d="M185.3 56.2L-38.4 7.4" stroke="#e2c8d2" stroke-width="3.7" opacity="0.58"/><path d="M194.1 54.1L44.9 12.5" stroke="#ccaebe" stroke-width="3.3" opacity="0.87"/><path d="M218.8 60.5L-100.1 -33.0" stroke="#c2a4b6" stroke-width="2.8" opacity="0.60"/><path d="M167.9 42.6L-17.2 -17.7" stroke="#d8bac8" stroke-width="1.4" opacity="0.88"/><path d="M220.9 58.4L-42.0 -38.1" stroke="#b496a8" stroke-width="3.2" opacity="0.90"/><path d="M199.0 47.3L26.2 -24.9" stroke="#d8bac8" stroke-width="3.1" opacity="0.87"/><path d="M192.0 43.2L-26.0 -52.1" stroke="#c2a4b6" stroke-width="1.8" opacity="0.51"/><path d="M167.2 29.2L13.5 -43.3" stroke="#e2c8d2" stroke-width="1.4" opacity="0.63"/><path d="M198.1 41.3L58.1 -30.5" stroke="#e2c8d2" stroke-width="2.7" opacity="0.89"/><path d="M212.6 46.0L25.1 -61.5" stroke="#ccaebe" stroke-width="1.4" opacity="0.55"/><path d="M190.0 31.5L11.1 -75.0" stroke="#d8bac8" stroke-width="1.9" opacity="0.52"/><path d="M208.7 39.7L-1.1 -97.7" stroke="#b496a8" stroke-width="1.6" opacity="0.88"/><path d="M201.5 32.0L-13.9 -120.6" stroke="#b496a8" stroke-width="3.6" opacity="0.63"/><path d="M191.8 22.7L82.6 -58.5" stroke="#d8bac8" stroke-width="1.4" opacity="0.89"/><path d="M195.4 22.1L86.2 -65.1" stroke="#b496a8" stroke-width="1.5" opacity="0.52"/><path d="M229.6 48.4L53.9 -97.7" stroke="#b496a8" stroke-width="3.6" opacity="0.62"/><path d="M199.1 17.7L-15.5 -180.1" stroke="#d8bac8" stroke-width="2.5" opacity="0.83"/><path d="M207.8 21.4L58.1 -129.6" stroke="#d8bac8" stroke-width="1.4" opacity="0.79"/><path d="M198.3 8.9L61.3 -135.8" stroke="#ccaebe" stroke-width="2.6" opacity="0.88"/><path d="M207.3 15.7L106.5 -96.3" stroke="#b496a8" stroke-width="1.3" opacity="0.58"/><path d="M194.9 -3.5L119.2 -94.0" stroke="#ccaebe" stroke-width="2.7" opacity="0.61"/><path d="M212.3 15.4L71.2 -159.5" stroke="#b496a8" stroke-width="3.0" opacity="0.82"/><path d="M222.4 22.1L139.6 -93.8" stroke="#ccaebe" stroke-width="3.5" opacity="0.54"/><path d="M218.5 14.8L149.7 -84.6" stroke="#e2c8d2" stroke-width="3.4" opacity="0.57"/><path d="M233.8 33.9L142.6 -109.7" stroke="#c2a4b6" stroke-width="3.8" opacity="0.88"/><path d="M239.8 41.9L188.4 -42.8" stroke="#ccaebe" stroke-width="1.8" opacity="0.67"/><path d="M246.2 49.9L174.5 -84.2" stroke="#c2a4b6" stroke-width="3.7" opacity="0.81"/><path d="M227.0 13.8L172.0 -89.2" stroke="#ccaebe" stroke-width="3.4" opacity="0.67"/><path d="M240.5 36.1L171.6 -104.8" stroke="#e2c8d2" stroke-width="3.4" opacity="0.66"/><path d="M245.4 42.4L211.2 -37.8" stroke="#d8bac8" stroke-width="4.0" opacity="0.52"/><path d="M246.7 42.5L187.1 -113.7" stroke="#e2c8d2" stroke-width="3.5" opacity="0.75"/><path d="M247.4 43.0L199.3 -87.9" stroke="#d8bac8" stroke-width="1.2" opacity="0.69"/><path d="M239.1 10.6L211.5 -78.7" stroke="#ccaebe" stroke-width="3.5" opacity="0.46"/><path d="M240.9 15.1L210.5 -86.1" stroke="#b496a8" stroke-width="2.1" opacity="0.64"/><path d="M247.4 32.5L203.5 -130.9" stroke="#b496a8" stroke-width="2.5" opacity="0.82"/><path d="M244.1 9.0L214.8 -124.3" stroke="#ccaebe" stroke-width="1.6" opacity="0.69"/><path d="M251.3 39.4L226.2 -83.2" stroke="#ccaebe" stroke-width="1.2" opacity="0.53"/><path d="M250.3 22.5L229.0 -115.5" stroke="#b496a8" stroke-width="2.1" opacity="0.69"/><path d="M250.2 7.7L234.4 -122.0" stroke="#ccaebe" stroke-width="1.4" opacity="0.57"/><path d="M254.1 21.9L245.0 -93.3" stroke="#d8bac8" stroke-width="3.3" opacity="0.65"/><path d="M255.5 24.0L249.4 -93.4" stroke="#e2c8d2" stroke-width="3.1" opacity="0.68"/><path d="M257.5 35.9L255.9 -93.8" stroke="#c2a4b6" stroke-width="2.7" opacity="0.87"/><path d="M259.0 26.9L261.0 -60.3" stroke="#e2c8d2" stroke-width="2.4" opacity="0.65"/><path d="M258.7 43.7L261.6 -64.4" stroke="#d8bac8" stroke-width="3.1" opacity="0.85"/><path d="M261.3 17.4L269.6 -116.4" stroke="#ccaebe" stroke-width="1.6" opacity="0.89"/><path d="M262.1 29.3L278.5 -141.8" stroke="#ccaebe" stroke-width="2.6" opacity="0.52"/><path d="M263.4 32.1L280.5 -93.2" stroke="#c2a4b6" stroke-width="1.7" opacity="0.49"/><path d="M265.5 27.0L282.2 -73.2" stroke="#e2c8d2" stroke-width="3.2" opacity="0.60"/><path d="M263.7 44.7L292.2 -90.8" stroke="#ccaebe" stroke-width="4.0" opacity="0.89"/><path d="M263.9 45.9L288.5 -63.8" stroke="#c2a4b6" stroke-width="3.4" opacity="0.79"/><path d="M273.2 18.7L313.9 -123.6" stroke="#e2c8d2" stroke-width="3.8" opacity="0.52"/><path d="M275.5 18.2L311.4 -92.3" stroke="#d8bac8" stroke-width="1.5" opacity="0.81"/></g><g filter="url(#b3)"><path d="M0 74 Q70 70 150 84 L150 90 Q70 80 0 84Z" fill="#54435c" opacity=".6"/><path d="M0 92 Q80 88 190 98 L300 92 V104 L190 108 Q80 100 0 104Z" fill="#5a4862" opacity=".7"/><path d="M0 56 Q60 52 130 68 L130 72 Q60 60 0 62Z" fill="#54435c" opacity=".45"/><path d="M0 84 Q60 82 140 92" stroke="#b394a6" stroke-width="3" fill="none" opacity=".6"/><path d="M0 106 Q70 104 100 106" stroke="#b898a8" stroke-width="4" fill="none" opacity=".6"/><path d="M215 88 L255 84 L262 88 L225 94Z" fill="#c8a8b4" opacity=".7"/><path d="M200 106 L300 98 V104 L215 112Z" fill="#c0a0ae" opacity=".65"/><path d="M220 116 L300 110 V120 L250 122Z" fill="#5e4a62" opacity=".55"/></g><ellipse cx="70" cy="80" rx="120" ry="22" fill="#54445e" opacity=".35" filter="url(#b6)"/><rect x="-10" y="110" width="320" height="62" fill="#a88a9a" opacity=".75" filter="url(#b6)"/><ellipse cx="60" cy="120" rx="110" ry="26" fill="#62506a" opacity=".5" filter="url(#b6)"/><ellipse cx="240" cy="146" rx="90" ry="20" fill="#d0b0ba" opacity=".75" filter="url(#b6)"/><path d="M64 124 L80 116 L96 104 L105 99 L112 101 L122 104 L134 101 L160 101 L182 106 L196 112 L206 119 L198 124 L150 126 L100 130Z" fill="#433246"/><path d="M105 99 L112 101 L122 104 L134 101 L160 101 L150 110 L124 114 L96 116Z" fill="#54425a" opacity=".5"/><path d="M50 128 L100 122 L210 118 L210 130 L160 148 L90 150 L50 144Z" fill="#7e6478" opacity=".85" filter="url(#b3)"/><path d="M0 134 Q26 126 64 128 L100 140 L70 152 L0 150Z" fill="#7a6074" opacity=".8" filter="url(#b3)"/><path d="M100 152 Q180 140 300 134 V168 H60Z" fill="#c4a4b0" opacity=".8" filter="url(#b3)"/><rect x="-5" y="154" width="310" height="12" fill="#c8a8b2" opacity=".7" filter="url(#b3)"/><rect x="0" y="165" width="300" height="172" fill="url(#wat)"/><rect x="0" y="165" width="300" height="172" fill="url(#wl)"/><rect x="-5" y="163" width="310" height="4" fill="#5e4a5e" opacity=".75" filter="url(#b1)"/><ellipse cx="250" cy="186" rx="60" ry="16" fill="url(#sun)" opacity=".8"/><ellipse cx="262" cy="181" rx="26" ry="2.500" fill="#f4dde2" opacity=".9" filter="url(#b1)"/><ellipse cx="256" cy="193" rx="22" ry="3.500" fill="#ecd0d8" opacity=".85" filter="url(#b1)"/><ellipse cx="252" cy="200" rx="14" ry="2" fill="#e0c4cc" opacity=".6" filter="url(#b1)"/><ellipse cx="252" cy="326" rx="24" ry="16" fill="url(#sun)"/><path d="M243 314h14v3h5v4h-7v3h9v4h-6v4h-16v-5h4v-4h-6v-4h3z" fill="#fff" opacity=".95" filter="url(#b1)"/><g filter="url(#b6)" opacity=".5"><ellipse cx="120" cy="206" rx="60" ry="9" fill="#54445a"/><ellipse cx="80" cy="300" rx="90" ry="18" fill="#473a50"/><ellipse cx="200" cy="250" rx="80" ry="12" fill="#8a7484"/><ellipse cx="180" cy="285" rx="50" ry="8" fill="#4e4156"/></g><path d="M7 190 L4 178 L8 162 L16 142 L22 126 L27 121 L35 125 L40 140 L47 160 L51 178 L49 191 L36 194 L18 194Z" fill="#115a1c"/><path d="M22 126 L27 121 L35 125 L37 135 L27 139Z" fill="#3e2c34"/><path d="M16 142 L27 139 L32 158 L23 178 L11 170Z" fill="#1c8c2c"/><path d="M32 158 L40 140 L47 160 L44 182 L30 186Z" fill="#0b3c12"/><path d="M11 170 L23 178 L19 192 L9 186Z" fill="#22a634"/><path d="M29 148 L35 148 L33 164Z" fill="#0c3412"/><path d="M18 150 l4 -6 l1 12z" fill="#4ee060"/><ellipse cx="26" cy="196" rx="30" ry="3" fill="#3c3040" opacity=".6" filter="url(#b1)"/><path d="M14 202 Q28 198 46 202 L44 232 Q36 262 28 258 Q18 250 16 226Z" fill="#3d5a46" opacity=".7" filter="url(#b3)"/><path d="M25 236 l5 -10 l2 24 z" fill="#2ea63c" opacity=".75" filter="url(#b1)"/><path d="M59 180 L63 170 L68 166 L72 174 L71 182Z" fill="#1f9a30"/><path d="M63 170 L68 166 L66 174Z" fill="#5ae86a"/><path d="M75 178 L78 170 L86 168 L92 174 L91 180Z" fill="#1a7a28"/><path d="M78 170 L86 168 L84 174Z" fill="#3cc44c"/><path d="M120 172 l3-6 4 0 2 6z M134 170 l4-8 4 8z M140 180 l4-8 8 2 4 6z M153 172 l4-8 6 2 2 6z M188 172 l4-13 3 13z M196 176 l3-10 4 2 2 8z M278 172 l2-11 3 2 1 9z" fill="#1a3a22"/><path d="M143 176 l4-4 4 2z" fill="#2a8a3a"/></g></svg>
</body></html>
